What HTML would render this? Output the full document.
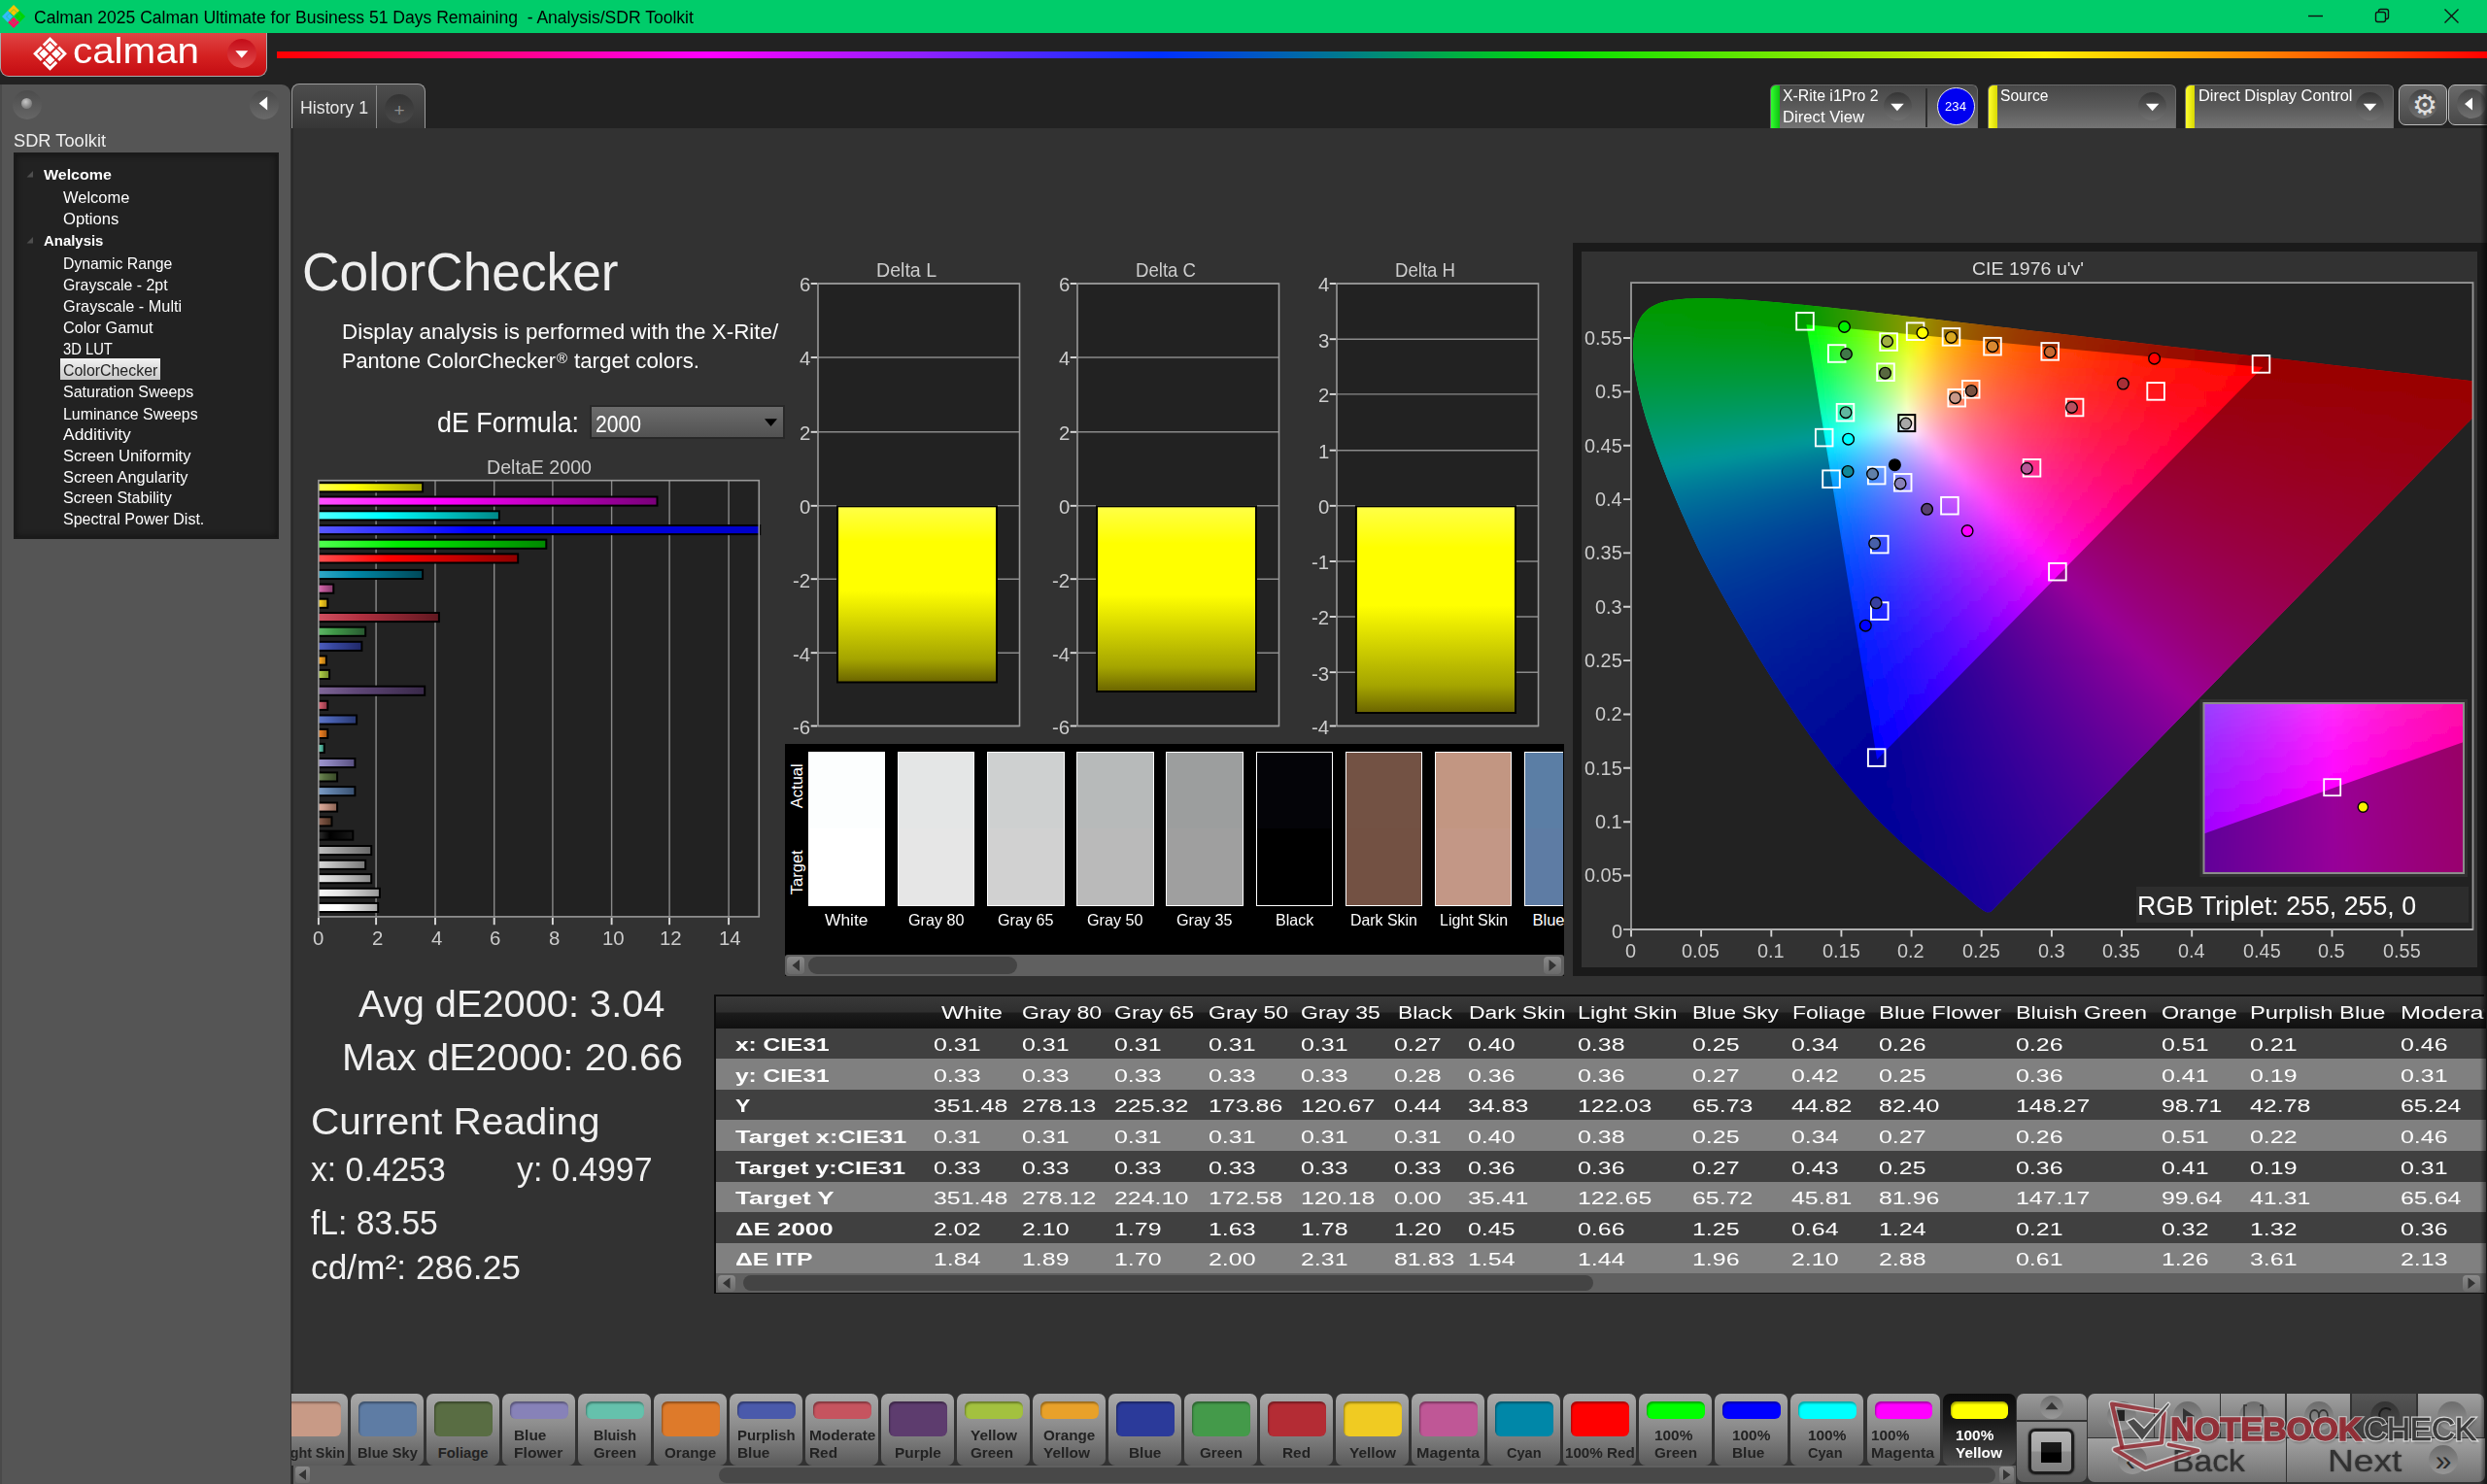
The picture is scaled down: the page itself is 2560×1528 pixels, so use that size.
<!DOCTYPE html>
<html><head><meta charset="utf-8"><title>Calman ColorChecker</title>
<style>
html,body{margin:0;padding:0;background:#323232;}
body{width:2560px;height:1528px;position:relative;overflow:hidden;font-family:"Liberation Sans",sans-serif;}
.a{position:absolute;box-sizing:border-box;}
.t{position:absolute;white-space:nowrap;line-height:1;transform-origin:0 50%;}
svg{position:absolute;left:0;top:0;}
</style></head>
<body>
<div class="a" style="left:0.0px;top:0.0px;width:2560.0px;height:34.0px;background:#00cc6a;"></div>
<span class="t" style="left:35.0px;top:9.1px;font-size:18.00px;color:#000;transform:scaleX(0.974);white-space:pre;">Calman 2025 Calman Ultimate for Business 51 Days Remaining  - Analysis/SDR Toolkit</span>
<div class="a" style="left:0.0px;top:34.0px;width:2560.0px;height:98.0px;background:#222;"></div>
<div class="a" style="left:0.0px;top:87.0px;width:299.0px;height:1441.0px;background:#555;border-top-right-radius:9px;border-left:2px solid #4a4a4a;"></div>
<div class="a" style="left:300.0px;top:132.0px;width:2260.0px;height:1396.0px;background:#323232;border-left:2px solid #2a2a2a;"></div>
<div class="a" style="left:0.0px;top:34.0px;width:275.0px;height:45.0px;background:linear-gradient(#e04444,#d42020 55%,#c40c12);border:1.5px solid #a9a9a9;border-top:none;border-radius:0 0 9px 9px;"></div>
<span class="t" style="left:74.6px;top:34.5px;font-size:36.50px;color:#fff;transform:scaleX(1.105);">calman</span>
<div class="a" style="left:234.0px;top:40.0px;width:30.0px;height:30.0px;border-radius:50%;background:linear-gradient(#c40c18,#e24a4a);"></div>
<div class="a" style="left:285.0px;top:52.5px;width:2275.0px;height:7.5px;background:linear-gradient(90deg,#ff0000 0%,#ff0080 10%,#ff00ff 19.5%,#9020ff 29%,#0030ff 40%,#007890 48%,#00e000 58%,#80e800 69%,#fff000 80%,#ff8000 90%,#ff0000 100%);"></div>
<div class="a" style="left:13.0px;top:92.5px;width:30.0px;height:30.0px;border-radius:50%;background:linear-gradient(#4c4c4c,#666);"></div>
<div class="a" style="left:22.2px;top:101.0px;width:11.0px;height:11.0px;border-radius:50%;background:radial-gradient(circle at 40% 35%,#c8c8c8,#858585 60%,#686868);"></div>
<div class="a" style="left:256.5px;top:92.5px;width:30.0px;height:30.0px;border-radius:50%;background:linear-gradient(#4a4a4a,#6a6a6a);"></div>
<span class="t" style="left:14.0px;top:134.6px;font-size:19.00px;color:#eee;transform:scaleX(0.961);">SDR Toolkit</span>
<div class="a" style="left:14.0px;top:157.0px;width:273.0px;height:398.0px;background:#222;border:2px solid #1a1a1a;box-shadow:inset 0 0 6px #111;"></div>
<span class="t" style="left:44.7px;top:171.8px;font-size:15.50px;color:#fff;font-weight:bold;transform:scaleX(1.031);">Welcome</span>
<svg width="300" height="600" viewBox="0 0 300 600"><path d="M34 176.1 v6.500 h-6.500Z" fill="#4e4e4e"/></svg>
<span class="t" style="left:64.5px;top:195.3px;font-size:16.20px;color:#fff;transform:scaleX(1.019);">Welcome</span>
<span class="t" style="left:64.5px;top:217.4px;font-size:16.20px;color:#fff;transform:scaleX(1.025);">Options</span>
<span class="t" style="left:44.7px;top:239.8px;font-size:15.50px;color:#fff;font-weight:bold;transform:scaleX(0.963);">Analysis</span>
<svg width="300" height="600" viewBox="0 0 300 600"><path d="M34 244.1 v6.500 h-6.500Z" fill="#4e4e4e"/></svg>
<span class="t" style="left:64.5px;top:263.2px;font-size:16.20px;color:#fff;transform:scaleX(0.975);">Dynamic Range</span>
<span class="t" style="left:64.5px;top:285.3px;font-size:16.20px;color:#fff;transform:scaleX(0.980);">Grayscale - 2pt</span>
<span class="t" style="left:64.5px;top:307.1px;font-size:16.20px;color:#fff;transform:scaleX(1.006);">Grayscale - Multi</span>
<span class="t" style="left:64.5px;top:329.2px;font-size:16.20px;color:#fff;transform:scaleX(1.008);">Color Gamut</span>
<span class="t" style="left:64.5px;top:351.0px;font-size:16.20px;color:#fff;transform:scaleX(0.912);">3D LUT</span>
<div class="a" style="left:61.5px;top:368.6px;width:103.5px;height:22.4px;background:linear-gradient(#f2f2f2,#c8c8c8);"></div>
<span class="t" style="left:64.5px;top:372.8px;font-size:16.20px;color:#222;transform:scaleX(0.983);">ColorChecker</span>
<span class="t" style="left:64.5px;top:395.4px;font-size:16.20px;color:#fff;transform:scaleX(0.988);">Saturation Sweeps</span>
<span class="t" style="left:64.5px;top:417.5px;font-size:16.20px;color:#fff;transform:scaleX(0.981);">Luminance Sweeps</span>
<span class="t" style="left:64.5px;top:439.3px;font-size:16.20px;color:#fff;transform:scaleX(1.078);">Additivity</span>
<span class="t" style="left:64.5px;top:461.3px;font-size:16.20px;color:#fff;transform:scaleX(1.022);">Screen Uniformity</span>
<span class="t" style="left:64.5px;top:482.6px;font-size:16.20px;color:#fff;transform:scaleX(1.012);">Screen Angularity</span>
<span class="t" style="left:64.5px;top:504.4px;font-size:16.20px;color:#fff;transform:scaleX(0.993);">Screen Stability</span>
<span class="t" style="left:64.5px;top:526.4px;font-size:16.20px;color:#fff;transform:scaleX(0.991);">Spectral Power Dist.</span>
<div class="a" style="left:299.8px;top:86.4px;width:137.8px;height:46.0px;background:linear-gradient(#4d4d4d,#373737);border:1.4px solid #9c9c9c;border-bottom:none;border-radius:8px 8px 0 0;"></div>
<div class="a" style="left:387.0px;top:88.0px;width:1.4px;height:44.0px;background:#8a8a8a;"></div>
<span class="t" style="left:309.0px;top:100.9px;font-size:19.00px;color:#e8e8e8;transform:scaleX(0.934);">History 1</span>
<div class="a" style="left:396.2px;top:97.0px;width:30.0px;height:30.0px;border-radius:50%;background:linear-gradient(#333,#4a4a4a);"></div>
<span class="t" style="left:405.5px;top:103.9px;font-size:19.00px;color:#8c8c8c;">+</span>
<div class="a" style="left:1821.5px;top:86.5px;width:214.0px;height:45.5px;background:linear-gradient(#474747,#5a5a5a 50%,#747474);border-radius:6px 6px 0 0;border:1px solid #6a6a6a;border-bottom:none;overflow:hidden;"><div class="a" style="left:0;top:0;width:9px;height:46px;background:linear-gradient(90deg,#30ff30,#10c010);"></div></div>
<span class="t" style="left:1835.0px;top:91.0px;font-size:16.00px;color:#fff;transform:scaleX(0.989);">X-Rite i1Pro 2</span>
<span class="t" style="left:1835.0px;top:113.0px;font-size:16.00px;color:#fff;transform:scaleX(1.042);">Direct View</span>
<div class="a" style="left:1938.5px;top:94.5px;width:29.0px;height:29.0px;border-radius:50%;background:linear-gradient(#353535,#727272);"></div>
<div class="a" style="left:1982.0px;top:91.0px;width:1.5px;height:40.0px;background:#2e2e2e;"></div>
<div class="a" style="left:1993.5px;top:89.5px;width:39.0px;height:39.0px;border-radius:50%;background:#0000f0;border:1.5px solid #e8e8e8;"></div>
<span class="t" style="left:2002.0px;top:103.0px;font-size:13.00px;color:#fff;transform:scaleX(1.014);">234</span>
<div class="a" style="left:2045.5px;top:86.5px;width:194.5px;height:45.5px;background:linear-gradient(#474747,#5a5a5a 50%,#747474);border-radius:6px 6px 0 0;border:1px solid #6a6a6a;border-bottom:none;overflow:hidden;"><div class="a" style="left:0;top:0;width:9px;height:46px;background:linear-gradient(90deg,#ffff30,#d8d800);"></div></div>
<span class="t" style="left:2058.5px;top:91.0px;font-size:16.00px;color:#fff;transform:scaleX(0.976);">Source</span>
<div class="a" style="left:2201.2px;top:94.5px;width:29.0px;height:29.0px;border-radius:50%;background:linear-gradient(#353535,#727272);"></div>
<div class="a" style="left:2249.0px;top:86.5px;width:215.0px;height:45.5px;background:linear-gradient(#474747,#5a5a5a 50%,#747474);border-radius:6px 6px 0 0;border:1px solid #6a6a6a;border-bottom:none;overflow:hidden;"><div class="a" style="left:0;top:0;width:9px;height:46px;background:linear-gradient(90deg,#ffff30,#d8d800);"></div></div>
<span class="t" style="left:2262.5px;top:91.0px;font-size:16.00px;color:#fff;transform:scaleX(1.024);">Direct Display Control</span>
<div class="a" style="left:2425.0px;top:94.5px;width:29.0px;height:29.0px;border-radius:50%;background:linear-gradient(#353535,#727272);"></div>
<div class="a" style="left:2469.0px;top:86.5px;width:50.0px;height:42.0px;background:linear-gradient(#6a6a6a,#484848);border:1.5px solid #bbb;border-radius:7px;"></div>
<div class="a" style="left:2519.5px;top:86.5px;width:50.0px;height:42.0px;background:linear-gradient(#6a6a6a,#484848);border:1.5px solid #bbb;border-radius:7px;"></div>
<div class="a" style="left:2478.5px;top:92.0px;width:30.0px;height:30.0px;border-radius:50%;background:linear-gradient(#444,#707070);"></div>
<div class="a" style="left:2529.0px;top:92.0px;width:30.0px;height:30.0px;border-radius:50%;background:linear-gradient(#444,#707070);"></div>
<span class="t" style="left:2483.1px;top:93.5px;font-size:29.00px;color:#e0e0e0;font-family:"DejaVu Sans",sans-serif;">⚙</span>
<svg width="2560" height="140" viewBox="0 0 2560 140"><path transform="translate(14.05 17.00) rotate(0)" d="M-4.9 -5 L0 -9.9 L4.9 -5" fill="none" stroke="#ffc400" stroke-width="3"/><path d="M14.05 9.75 L17.25 12.95 L14.05 16.15 L10.85 12.95Z" fill="#ffc400"/><path transform="translate(14.05 17.00) rotate(90)" d="M-4.9 -5 L0 -9.9 L4.9 -5" fill="none" stroke="#00d400" stroke-width="3"/><path d="M18.10 13.80 L21.30 17.00 L18.10 20.20 L14.90 17.00Z" fill="#00d400"/><path transform="translate(14.05 17.00) rotate(180)" d="M-4.9 -5 L0 -9.9 L4.9 -5" fill="none" stroke="#ff1060" stroke-width="3"/><path d="M14.05 17.85 L17.25 21.05 L14.05 24.25 L10.85 21.05Z" fill="#ff1060"/><path transform="translate(14.05 17.00) rotate(270)" d="M-4.9 -5 L0 -9.9 L4.9 -5" fill="none" stroke="#33bbff" stroke-width="3"/><path d="M10.00 13.80 L13.20 17.00 L10.00 20.20 L6.80 17.00Z" fill="#33bbff"/><g stroke="#111" stroke-width="1.4" fill="none"><path d="M2376 16.5 H2391"/><rect x="2445.5" y="12.5" width="10" height="10" rx="2"/><path d="M2448.5 12 V11.5 a2 2 0 0 1 2 -2 H2456.5 a2 2 0 0 1 2 2 V17.5 a2 2 0 0 1 -2 2 H2456"/><path d="M2516.5 9.5 L2530.5 23.5 M2530.5 9.5 L2516.5 23.5"/></g><path transform="translate(51.5 55.3) rotate(0)" d="M-6.7 -8.6 L0 -15.3 L6.7 -8.6" fill="none" stroke="#fff" stroke-width="3"/><path transform="translate(51.5 55.3) rotate(90)" d="M-6.7 -8.6 L0 -15.3 L6.7 -8.6" fill="none" stroke="#fff" stroke-width="3"/><path transform="translate(51.5 55.3) rotate(180)" d="M-6.7 -8.6 L0 -15.3 L6.7 -8.6" fill="none" stroke="#fff" stroke-width="3"/><path transform="translate(51.5 55.3) rotate(270)" d="M-6.7 -8.6 L0 -15.3 L6.7 -8.6" fill="none" stroke="#fff" stroke-width="3"/><path d="M51.5 44.0 L56.4 48.9 L51.5 53.8 L46.6 48.9Z" fill="#fff"/><path d="M45.1 50.4 L50.0 55.3 L45.1 60.2 L40.2 55.3Z" fill="#fff"/><path d="M57.9 50.4 L62.8 55.3 L57.9 60.2 L53.0 55.3Z" fill="#fff"/><path d="M51.5 56.8 L56.4 61.7 L51.5 66.6 L46.6 61.7Z" fill="#fff"/><path d="M242.3 52.2 h13.0 l-6.5 7.5Z" fill="#fff"/><path d="M275.2 99.5 v14.0 l-8.5 -7.0Z" fill="#fff"/><path d="M1946.2 106.8 h13.5 l-6.8 7.5Z" fill="#fff"/><path d="M2208.9 106.8 h13.5 l-6.8 7.5Z" fill="#fff"/><path d="M2432.8 106.8 h13.5 l-6.8 7.5Z" fill="#fff"/><path d="M2545.0 100.5 v13.0 l-8.0 -6.5Z" fill="#fff"/></svg>
<span class="t" style="left:311.0px;top:251.6px;font-size:56.00px;color:#eee;transform:scaleX(0.951);">ColorChecker</span>
<span class="t" style="left:351.5px;top:331.0px;font-size:22.50px;color:#fff;transform:scaleX(0.995);">Display analysis is performed with the X-Rite/</span>
<span class="t" style="left:351.5px;top:361.0px;font-size:22.50px;color:#fff;transform:scaleX(0.967);">Pantone ColorChecker</span>
<span class="t" style="left:573.0px;top:362.0px;font-size:14.50px;color:#fff;transform:scaleX(1.030);">®</span>
<span class="t" style="left:591.4px;top:361.0px;font-size:22.50px;color:#fff;transform:scaleX(0.992);">target colors.</span>
<span class="t" style="left:450.0px;top:419.5px;font-size:29.50px;color:#fff;transform:scaleX(0.909);">dE Formula:</span>
<div class="a" style="left:606.5px;top:416.5px;width:201.0px;height:35.5px;background:linear-gradient(#6c6c6c,#525252);border:2px solid #282828;"></div>
<span class="t" style="left:613.0px;top:426.0px;font-size:23.00px;color:#fff;transform:scaleX(0.919);">2000</span>
<span class="t" style="left:501.0px;top:470.6px;font-size:20.50px;color:#ccc;transform:scaleX(0.957);">DeltaE 2000</span>
<svg width="2560" height="1528" viewBox="0 0 2560 1528"><defs><linearGradient id="b0"><stop offset="0" stop-color="#ffff50"/><stop offset=".35" stop-color="#ffff00"/><stop offset="1" stop-color="#a8a800"/></linearGradient><linearGradient id="b1"><stop offset="0" stop-color="#ff50ff"/><stop offset=".35" stop-color="#ff00ff"/><stop offset="1" stop-color="#7a007a"/></linearGradient><linearGradient id="b2"><stop offset="0" stop-color="#50ffff"/><stop offset=".35" stop-color="#00ffff"/><stop offset="1" stop-color="#008888"/></linearGradient><linearGradient id="b3"><stop offset="0" stop-color="#5858ff"/><stop offset=".35" stop-color="#0000ff"/><stop offset="1" stop-color="#0000c8"/></linearGradient><linearGradient id="b4"><stop offset="0" stop-color="#50ff50"/><stop offset=".35" stop-color="#00ee00"/><stop offset="1" stop-color="#008800"/></linearGradient><linearGradient id="b5"><stop offset="0" stop-color="#ff5050"/><stop offset=".35" stop-color="#ff0000"/><stop offset="1" stop-color="#900000"/></linearGradient><linearGradient id="b6"><stop offset="0" stop-color="#30a8c8"/><stop offset=".35" stop-color="#0088a8"/><stop offset="1" stop-color="#004858"/></linearGradient><linearGradient id="b7"><stop offset="0" stop-color="#d878b8"/><stop offset=".35" stop-color="#c05898"/><stop offset="1" stop-color="#803868"/></linearGradient><linearGradient id="b8"><stop offset="0" stop-color="#ffe040"/><stop offset=".35" stop-color="#f0c820"/><stop offset="1" stop-color="#b09010"/></linearGradient><linearGradient id="b9"><stop offset="0" stop-color="#d05060"/><stop offset=".35" stop-color="#b03040"/><stop offset="1" stop-color="#601820"/></linearGradient><linearGradient id="b10"><stop offset="0" stop-color="#60b868"/><stop offset=".35" stop-color="#409848"/><stop offset="1" stop-color="#285830"/></linearGradient><linearGradient id="b11"><stop offset="0" stop-color="#5060c0"/><stop offset=".35" stop-color="#3848a0"/><stop offset="1" stop-color="#202868"/></linearGradient><linearGradient id="b12"><stop offset="0" stop-color="#ffb840"/><stop offset=".35" stop-color="#f0a020"/><stop offset="1" stop-color="#a87010"/></linearGradient><linearGradient id="b13"><stop offset="0" stop-color="#c0d860"/><stop offset=".35" stop-color="#a0c040"/><stop offset="1" stop-color="#708828"/></linearGradient><linearGradient id="b14"><stop offset="0" stop-color="#806898"/><stop offset=".35" stop-color="#604878"/><stop offset="1" stop-color="#382848"/></linearGradient><linearGradient id="b15"><stop offset="0" stop-color="#e07080"/><stop offset=".35" stop-color="#c85868"/><stop offset="1" stop-color="#883040"/></linearGradient><linearGradient id="b16"><stop offset="0" stop-color="#6078c8"/><stop offset=".35" stop-color="#4860b0"/><stop offset="1" stop-color="#283870"/></linearGradient><linearGradient id="b17"><stop offset="0" stop-color="#f09040"/><stop offset=".35" stop-color="#e07820"/><stop offset="1" stop-color="#985010"/></linearGradient><linearGradient id="b18"><stop offset="0" stop-color="#80d8c0"/><stop offset=".35" stop-color="#60c0a8"/><stop offset="1" stop-color="#308070"/></linearGradient><linearGradient id="b19"><stop offset="0" stop-color="#a098d0"/><stop offset=".35" stop-color="#8880b8"/><stop offset="1" stop-color="#585080"/></linearGradient><linearGradient id="b20"><stop offset="0" stop-color="#789060"/><stop offset=".35" stop-color="#587040"/><stop offset="1" stop-color="#384828"/></linearGradient><linearGradient id="b21"><stop offset="0" stop-color="#80a0c8"/><stop offset=".35" stop-color="#6080a8"/><stop offset="1" stop-color="#385070"/></linearGradient><linearGradient id="b22"><stop offset="0" stop-color="#e0b0a0"/><stop offset=".35" stop-color="#c89888"/><stop offset="1" stop-color="#886050"/></linearGradient><linearGradient id="b23"><stop offset="0" stop-color="#906858"/><stop offset=".35" stop-color="#785040"/><stop offset="1" stop-color="#483020"/></linearGradient><linearGradient id="b24"><stop offset="0" stop-color="#303030"/><stop offset=".35" stop-color="#000000"/><stop offset="1" stop-color="#181818"/></linearGradient><linearGradient id="b25"><stop offset="0" stop-color="#c0c0c0"/><stop offset=".35" stop-color="#a0a0a0"/><stop offset="1" stop-color="#686868"/></linearGradient><linearGradient id="b26"><stop offset="0" stop-color="#d8d8d8"/><stop offset=".35" stop-color="#b8b8b8"/><stop offset="1" stop-color="#787878"/></linearGradient><linearGradient id="b27"><stop offset="0" stop-color="#e8e8e8"/><stop offset=".35" stop-color="#d0d0d0"/><stop offset="1" stop-color="#888888"/></linearGradient><linearGradient id="b28"><stop offset="0" stop-color="#f8f8f8"/><stop offset=".35" stop-color="#e6e6e6"/><stop offset="1" stop-color="#989898"/></linearGradient><linearGradient id="b29"><stop offset="0" stop-color="#ffffff"/><stop offset=".35" stop-color="#ffffff"/><stop offset="1" stop-color="#a8a8a8"/></linearGradient><linearGradient id="yb" x1="0" y1="0" x2="0" y2="1"><stop offset="0" stop-color="#ffff48"/><stop offset=".2" stop-color="#ffff00"/><stop offset=".48" stop-color="#ffff00"/><stop offset=".87" stop-color="#a4a400"/><stop offset="1" stop-color="#6a6400"/></linearGradient></defs><rect x="327.9" y="494.7" width="453.4" height="449.2" fill="#222"/><path d="M387.1 494.7 V943.9" stroke="#8a8a8a" stroke-width="1.4"/><path d="M387.1 944.7 v7.5" stroke="#dcdcdc" stroke-width="1.9"/><path d="M448.0 494.7 V943.9" stroke="#8a8a8a" stroke-width="1.4"/><path d="M448.0 944.7 v7.5" stroke="#dcdcdc" stroke-width="1.9"/><path d="M508.7 494.7 V943.9" stroke="#8a8a8a" stroke-width="1.4"/><path d="M508.7 944.7 v7.5" stroke="#dcdcdc" stroke-width="1.9"/><path d="M568.9 494.7 V943.9" stroke="#8a8a8a" stroke-width="1.4"/><path d="M568.9 944.7 v7.5" stroke="#dcdcdc" stroke-width="1.9"/><path d="M629.6 494.7 V943.9" stroke="#8a8a8a" stroke-width="1.4"/><path d="M629.6 944.7 v7.5" stroke="#dcdcdc" stroke-width="1.9"/><path d="M689.1 494.7 V943.9" stroke="#8a8a8a" stroke-width="1.4"/><path d="M689.1 944.7 v7.5" stroke="#dcdcdc" stroke-width="1.9"/><path d="M750.1 494.7 V943.9" stroke="#8a8a8a" stroke-width="1.4"/><path d="M750.1 944.7 v7.5" stroke="#dcdcdc" stroke-width="1.9"/><path d="M327.9 944.7 v7.5" stroke="#dcdcdc" stroke-width="1.9"/><clipPath id="bc"><rect x="327.9" y="494.7" width="455.4" height="449.2"/></clipPath><g clip-path="url(#bc)"><rect x="326.9" y="497.2" width="108.2" height="9.1" fill="url(#b0)" stroke="#000" stroke-width="2"/><rect x="326.9" y="511.5" width="349.6" height="9.1" fill="url(#b1)" stroke="#000" stroke-width="2"/><rect x="326.9" y="526.3" width="187.0" height="9.1" fill="url(#b2)" stroke="#000" stroke-width="2"/><rect x="326.9" y="541.0" width="455.9" height="9.1" fill="url(#b3)" stroke="#000" stroke-width="2"/><rect x="326.9" y="555.7" width="235.4" height="9.1" fill="url(#b4)" stroke="#000" stroke-width="2"/><rect x="326.9" y="570.4" width="206.3" height="9.1" fill="url(#b5)" stroke="#000" stroke-width="2"/><rect x="326.9" y="586.9" width="108.2" height="9.1" fill="url(#b6)" stroke="#000" stroke-width="2"/><rect x="326.9" y="601.6" width="16.4" height="9.1" fill="url(#b7)" stroke="#000" stroke-width="2"/><rect x="326.9" y="616.7" width="10.4" height="9.1" fill="url(#b8)" stroke="#000" stroke-width="2"/><rect x="326.9" y="631.0" width="125.0" height="9.1" fill="url(#b9)" stroke="#000" stroke-width="2"/><rect x="326.9" y="645.7" width="49.3" height="9.1" fill="url(#b10)" stroke="#000" stroke-width="2"/><rect x="326.9" y="660.8" width="45.5" height="9.1" fill="url(#b11)" stroke="#000" stroke-width="2"/><rect x="326.9" y="675.5" width="9.0" height="9.1" fill="url(#b12)" stroke="#000" stroke-width="2"/><rect x="326.9" y="689.9" width="12.2" height="9.1" fill="url(#b13)" stroke="#000" stroke-width="2"/><rect x="326.9" y="706.7" width="110.3" height="9.1" fill="url(#b14)" stroke="#000" stroke-width="2"/><rect x="326.9" y="721.8" width="10.4" height="9.1" fill="url(#b15)" stroke="#000" stroke-width="2"/><rect x="326.9" y="736.5" width="40.2" height="9.1" fill="url(#b16)" stroke="#000" stroke-width="2"/><rect x="326.9" y="750.9" width="10.4" height="9.1" fill="url(#b17)" stroke="#000" stroke-width="2"/><rect x="326.9" y="765.9" width="6.9" height="9.1" fill="url(#b18)" stroke="#000" stroke-width="2"/><rect x="326.9" y="781.0" width="38.5" height="9.1" fill="url(#b19)" stroke="#000" stroke-width="2"/><rect x="326.9" y="795.4" width="20.2" height="9.1" fill="url(#b20)" stroke="#000" stroke-width="2"/><rect x="326.9" y="810.1" width="38.5" height="9.1" fill="url(#b21)" stroke="#000" stroke-width="2"/><rect x="326.9" y="826.5" width="20.2" height="9.1" fill="url(#b22)" stroke="#000" stroke-width="2"/><rect x="326.9" y="841.3" width="14.6" height="9.1" fill="url(#b23)" stroke="#000" stroke-width="2"/><rect x="326.9" y="855.6" width="36.4" height="9.1" fill="url(#b24)" stroke="#000" stroke-width="2"/><rect x="326.9" y="871.0" width="55.3" height="9.1" fill="url(#b25)" stroke="#000" stroke-width="2"/><rect x="326.9" y="885.8" width="49.3" height="9.1" fill="url(#b26)" stroke="#000" stroke-width="2"/><rect x="326.9" y="900.1" width="55.3" height="9.1" fill="url(#b27)" stroke="#000" stroke-width="2"/><rect x="326.9" y="914.8" width="64.0" height="9.1" fill="url(#b28)" stroke="#000" stroke-width="2"/><rect x="326.9" y="929.9" width="62.3" height="9.1" fill="url(#b29)" stroke="#000" stroke-width="2"/></g><rect x="327.9" y="494.7" width="453.4" height="449.2" fill="none" stroke="#999" stroke-width="1.6"/><rect x="842.0" y="292.0" width="207.5" height="455.5" fill="#222"/><path d="M842.0 292.0 H1049.5" stroke="#8a8a8a" stroke-width="1.4"/><path d="M841.2 292.0 h-6.5" stroke="#dcdcdc" stroke-width="1.9"/><path d="M842.0 368.0 H1049.5" stroke="#8a8a8a" stroke-width="1.4"/><path d="M841.2 368.0 h-6.5" stroke="#dcdcdc" stroke-width="1.9"/><path d="M842.0 444.8 H1049.5" stroke="#8a8a8a" stroke-width="1.4"/><path d="M841.2 444.8 h-6.5" stroke="#dcdcdc" stroke-width="1.9"/><path d="M842.0 520.8 H1049.5" stroke="#8a8a8a" stroke-width="1.4"/><path d="M841.2 520.8 h-6.5" stroke="#dcdcdc" stroke-width="1.9"/><path d="M842.0 596.2 H1049.5" stroke="#8a8a8a" stroke-width="1.4"/><path d="M841.2 596.2 h-6.5" stroke="#dcdcdc" stroke-width="1.9"/><path d="M842.0 672.2 H1049.5" stroke="#8a8a8a" stroke-width="1.4"/><path d="M841.2 672.2 h-6.5" stroke="#dcdcdc" stroke-width="1.9"/><path d="M842.0 747.5 H1049.5" stroke="#8a8a8a" stroke-width="1.4"/><path d="M841.2 747.5 h-6.5" stroke="#dcdcdc" stroke-width="1.9"/><rect x="842.0" y="292.0" width="207.5" height="455.5" fill="none" stroke="#999" stroke-width="1.6"/><rect x="862.0" y="521.3" width="164.0" height="181.2" fill="url(#yb)" stroke="#000" stroke-width="2"/><rect x="1109.0" y="292.0" width="207.5" height="455.5" fill="#222"/><path d="M1109.0 292.0 H1316.5" stroke="#8a8a8a" stroke-width="1.4"/><path d="M1108.2 292.0 h-6.5" stroke="#dcdcdc" stroke-width="1.9"/><path d="M1109.0 368.0 H1316.5" stroke="#8a8a8a" stroke-width="1.4"/><path d="M1108.2 368.0 h-6.5" stroke="#dcdcdc" stroke-width="1.9"/><path d="M1109.0 444.8 H1316.5" stroke="#8a8a8a" stroke-width="1.4"/><path d="M1108.2 444.8 h-6.5" stroke="#dcdcdc" stroke-width="1.9"/><path d="M1109.0 520.8 H1316.5" stroke="#8a8a8a" stroke-width="1.4"/><path d="M1108.2 520.8 h-6.5" stroke="#dcdcdc" stroke-width="1.9"/><path d="M1109.0 596.2 H1316.5" stroke="#8a8a8a" stroke-width="1.4"/><path d="M1108.2 596.2 h-6.5" stroke="#dcdcdc" stroke-width="1.9"/><path d="M1109.0 672.2 H1316.5" stroke="#8a8a8a" stroke-width="1.4"/><path d="M1108.2 672.2 h-6.5" stroke="#dcdcdc" stroke-width="1.9"/><path d="M1109.0 747.5 H1316.5" stroke="#8a8a8a" stroke-width="1.4"/><path d="M1108.2 747.5 h-6.5" stroke="#dcdcdc" stroke-width="1.9"/><rect x="1109.0" y="292.0" width="207.5" height="455.5" fill="none" stroke="#999" stroke-width="1.6"/><rect x="1129.0" y="521.3" width="164.0" height="190.7" fill="url(#yb)" stroke="#000" stroke-width="2"/><rect x="1376.0" y="292.0" width="207.5" height="455.5" fill="#222"/><path d="M1376.0 292.0 H1583.5" stroke="#8a8a8a" stroke-width="1.4"/><path d="M1375.2 292.0 h-6.5" stroke="#dcdcdc" stroke-width="1.9"/><path d="M1376.0 349.2 H1583.5" stroke="#8a8a8a" stroke-width="1.4"/><path d="M1375.2 349.2 h-6.5" stroke="#dcdcdc" stroke-width="1.9"/><path d="M1376.0 405.9 H1583.5" stroke="#8a8a8a" stroke-width="1.4"/><path d="M1375.2 405.9 h-6.5" stroke="#dcdcdc" stroke-width="1.9"/><path d="M1376.0 463.7 H1583.5" stroke="#8a8a8a" stroke-width="1.4"/><path d="M1375.2 463.7 h-6.5" stroke="#dcdcdc" stroke-width="1.9"/><path d="M1376.0 520.8 H1583.5" stroke="#8a8a8a" stroke-width="1.4"/><path d="M1375.2 520.8 h-6.5" stroke="#dcdcdc" stroke-width="1.9"/><path d="M1376.0 578.0 H1583.5" stroke="#8a8a8a" stroke-width="1.4"/><path d="M1375.2 578.0 h-6.5" stroke="#dcdcdc" stroke-width="1.9"/><path d="M1376.0 635.0 H1583.5" stroke="#8a8a8a" stroke-width="1.4"/><path d="M1375.2 635.0 h-6.5" stroke="#dcdcdc" stroke-width="1.9"/><path d="M1376.0 692.2 H1583.5" stroke="#8a8a8a" stroke-width="1.4"/><path d="M1375.2 692.2 h-6.5" stroke="#dcdcdc" stroke-width="1.9"/><path d="M1376.0 747.5 H1583.5" stroke="#8a8a8a" stroke-width="1.4"/><path d="M1375.2 747.5 h-6.5" stroke="#dcdcdc" stroke-width="1.9"/><rect x="1376.0" y="292.0" width="207.5" height="455.5" fill="none" stroke="#999" stroke-width="1.6"/><rect x="1395.9" y="521.3" width="164.1" height="212.7" fill="url(#yb)" stroke="#000" stroke-width="2"/><path d="M787 431.3 h13 l-6.5 7.7Z" fill="#000"/></svg>
<span class="t" style="left:322.2px;top:955.9px;font-size:20.00px;color:#ccc;transform:scaleX(1.020);">0</span>
<span class="t" style="left:382.8px;top:955.9px;font-size:20.00px;color:#ccc;transform:scaleX(1.020);">2</span>
<span class="t" style="left:443.7px;top:955.9px;font-size:20.00px;color:#ccc;transform:scaleX(1.020);">4</span>
<span class="t" style="left:504.4px;top:955.9px;font-size:20.00px;color:#ccc;transform:scaleX(1.020);">6</span>
<span class="t" style="left:564.6px;top:955.9px;font-size:20.00px;color:#ccc;transform:scaleX(1.020);">8</span>
<span class="t" style="left:619.7px;top:955.9px;font-size:20.00px;color:#ccc;transform:scaleX(1.020);">10</span>
<span class="t" style="left:679.2px;top:955.9px;font-size:20.00px;color:#ccc;transform:scaleX(1.020);">12</span>
<span class="t" style="left:740.2px;top:955.9px;font-size:20.00px;color:#ccc;transform:scaleX(1.020);">14</span>
<span class="t" style="left:822.7px;top:283.4px;font-size:20.00px;color:#ccc;transform:scaleX(1.020);">6</span>
<span class="t" style="left:822.7px;top:359.4px;font-size:20.00px;color:#ccc;transform:scaleX(1.020);">4</span>
<span class="t" style="left:822.7px;top:436.2px;font-size:20.00px;color:#ccc;transform:scaleX(1.020);">2</span>
<span class="t" style="left:822.7px;top:512.2px;font-size:20.00px;color:#ccc;transform:scaleX(1.020);">0</span>
<span class="t" style="left:815.9px;top:587.6px;font-size:20.00px;color:#ccc;transform:scaleX(1.020);">-2</span>
<span class="t" style="left:815.9px;top:663.6px;font-size:20.00px;color:#ccc;transform:scaleX(1.020);">-4</span>
<span class="t" style="left:815.9px;top:738.9px;font-size:20.00px;color:#ccc;transform:scaleX(1.020);">-6</span>
<span class="t" style="left:902.0px;top:267.6px;font-size:20.50px;color:#ccc;transform:scaleX(0.955);">Delta L</span>
<span class="t" style="left:1089.7px;top:283.4px;font-size:20.00px;color:#ccc;transform:scaleX(1.020);">6</span>
<span class="t" style="left:1089.7px;top:359.4px;font-size:20.00px;color:#ccc;transform:scaleX(1.020);">4</span>
<span class="t" style="left:1089.7px;top:436.2px;font-size:20.00px;color:#ccc;transform:scaleX(1.020);">2</span>
<span class="t" style="left:1089.7px;top:512.2px;font-size:20.00px;color:#ccc;transform:scaleX(1.020);">0</span>
<span class="t" style="left:1082.9px;top:587.6px;font-size:20.00px;color:#ccc;transform:scaleX(1.020);">-2</span>
<span class="t" style="left:1082.9px;top:663.6px;font-size:20.00px;color:#ccc;transform:scaleX(1.020);">-4</span>
<span class="t" style="left:1082.9px;top:738.9px;font-size:20.00px;color:#ccc;transform:scaleX(1.020);">-6</span>
<span class="t" style="left:1168.5px;top:267.6px;font-size:20.50px;color:#ccc;transform:scaleX(0.907);">Delta C</span>
<span class="t" style="left:1356.7px;top:283.4px;font-size:20.00px;color:#ccc;transform:scaleX(1.020);">4</span>
<span class="t" style="left:1356.7px;top:340.6px;font-size:20.00px;color:#ccc;transform:scaleX(1.020);">3</span>
<span class="t" style="left:1356.7px;top:397.3px;font-size:20.00px;color:#ccc;transform:scaleX(1.020);">2</span>
<span class="t" style="left:1356.7px;top:455.1px;font-size:20.00px;color:#ccc;transform:scaleX(1.020);">1</span>
<span class="t" style="left:1356.7px;top:512.2px;font-size:20.00px;color:#ccc;transform:scaleX(1.020);">0</span>
<span class="t" style="left:1349.9px;top:569.4px;font-size:20.00px;color:#ccc;transform:scaleX(1.020);">-1</span>
<span class="t" style="left:1349.9px;top:626.4px;font-size:20.00px;color:#ccc;transform:scaleX(1.020);">-2</span>
<span class="t" style="left:1349.9px;top:683.6px;font-size:20.00px;color:#ccc;transform:scaleX(1.020);">-3</span>
<span class="t" style="left:1349.9px;top:738.9px;font-size:20.00px;color:#ccc;transform:scaleX(1.020);">-4</span>
<span class="t" style="left:1435.5px;top:267.6px;font-size:20.50px;color:#ccc;transform:scaleX(0.907);">Delta H</span>
<div class="a" style="left:808.0px;top:766.0px;width:801.5px;height:239.0px;background:#000;"></div>
<div class="a" style="left:831.7px;top:773.7px;width:79.5px;height:159.6px;background:linear-gradient(#fcfefe 50%,#ffffff 50%);border:1.6px solid #fff;"></div>
<span class="t" style="left:849.2px;top:938.8px;font-size:16.50px;color:#fff;transform:scaleX(1.055);">White</span>
<div class="a" style="left:923.9px;top:773.7px;width:79.5px;height:159.6px;background:linear-gradient(#e4e6e6 50%,#e6e6e6 50%);border:1.6px solid #fff;"></div>
<span class="t" style="left:934.9px;top:938.8px;font-size:16.50px;color:#fff;transform:scaleX(0.978);">Gray 80</span>
<div class="a" style="left:1016.0px;top:773.7px;width:79.5px;height:159.6px;background:linear-gradient(#ced0d0 50%,#d1d1d1 50%);border:1.6px solid #fff;"></div>
<span class="t" style="left:1027.0px;top:938.8px;font-size:16.50px;color:#fff;transform:scaleX(0.978);">Gray 65</span>
<div class="a" style="left:1108.2px;top:773.7px;width:79.5px;height:159.6px;background:linear-gradient(#b7baba 50%,#bababa 50%);border:1.6px solid #fff;"></div>
<span class="t" style="left:1119.2px;top:938.8px;font-size:16.50px;color:#fff;transform:scaleX(0.978);">Gray 50</span>
<div class="a" style="left:1200.4px;top:773.7px;width:79.5px;height:159.6px;background:linear-gradient(#9c9e9e 50%,#9f9f9f 50%);border:1.6px solid #fff;"></div>
<span class="t" style="left:1211.4px;top:938.8px;font-size:16.50px;color:#fff;transform:scaleX(0.978);">Gray 35</span>
<div class="a" style="left:1292.6px;top:773.7px;width:79.5px;height:159.6px;background:linear-gradient(#040408 50%,#000000 50%);border:1.6px solid #fff;"></div>
<span class="t" style="left:1312.7px;top:938.8px;font-size:16.50px;color:#fff;transform:scaleX(0.972);">Black</span>
<div class="a" style="left:1384.7px;top:773.7px;width:79.5px;height:159.6px;background:linear-gradient(#735244 50%,#735143 50%);border:1.6px solid #fff;"></div>
<span class="t" style="left:1390.0px;top:938.8px;font-size:16.50px;color:#fff;transform:scaleX(0.963);">Dark Skin</span>
<div class="a" style="left:1476.9px;top:773.7px;width:79.5px;height:159.6px;background:linear-gradient(#c29682 50%,#c39786 50%);border:1.6px solid #fff;"></div>
<span class="t" style="left:1481.5px;top:938.8px;font-size:16.50px;color:#fff;transform:scaleX(0.969);">Light Skin</span>
<div class="a" style="left:1569.1px;top:773.7px;width:40.4px;height:159.6px;background:linear-gradient(#5b7ea5 50%,#5e7ca4 50%);border:1.6px solid #fff;border-right:none;"></div>
<div class="a" style="left:1570.0px;top:935.0px;width:39.5px;height:30.0px;overflow:hidden;"><span class="t" style="left:7.5px;top:3.8px;font-size:16.50px;color:#fff;">Blue Sky</span></div>
<span class="t" style="left:0.0px;top:-14.0px;font-size:16.50px;color:#fff;left:797px;top:801.3px;transform:rotate(-90deg);transform-origin:50% 50%;width:46px;text-align:center;">Actual</span>
<span class="t" style="left:0.0px;top:-14.0px;font-size:16.50px;color:#fff;left:797px;top:890.3px;transform:rotate(-90deg);transform-origin:50% 50%;width:46px;text-align:center;">Target</span>
<div class="a" style="left:808.0px;top:983.0px;width:801.5px;height:22.0px;background:#606060;border-radius:3px;"></div>
<div class="a" style="left:810.0px;top:985.0px;width:18.0px;height:18.0px;background:linear-gradient(#8a8a8a,#6a6a6a);border-radius:4px;"></div>
<div class="a" style="left:1589.0px;top:985.0px;width:18.0px;height:18.0px;background:linear-gradient(#8a8a8a,#6a6a6a);border-radius:4px;"></div>
<div class="a" style="left:832.0px;top:985.0px;width:215.0px;height:18.0px;background:#444;border-radius:9px;"></div>
<svg width="2560" height="1528" viewBox="0 0 2560 1528"><path d="M823 988 v12 l-7.5 -6Z M1594.5 988 v12 l7.5 -6Z" fill="#333"/></svg>
<div class="a" style="left:1619.0px;top:249.9px;width:950.0px;height:755.0px;background:#1a1a1a;"></div>
<div class="a" style="left:1628.0px;top:258.8px;width:922.0px;height:737.1px;background:#323232;"></div>
<span class="t" style="left:2030.0px;top:267.8px;font-size:18.50px;color:#ddd;transform:scaleX(1.056);">CIE 1976 u&#x27;v&#x27;</span>
<svg width="2560" height="1528" viewBox="0 0 2560 1528"><defs><linearGradient id="g0" gradientUnits="userSpaceOnUse" x1="1697" x2="1858"><stop offset="0" stop-color="#00ff00"/><stop offset=".909" stop-color="#00ff00"/><stop offset="1" stop-color="#05ff00"/></linearGradient><linearGradient id="g1" gradientUnits="userSpaceOnUse" x1="1684" x2="1933"><stop offset="0" stop-color="#00ff00"/><stop offset=".688" stop-color="#00ff00"/><stop offset=".875" stop-color="#52ff00"/><stop offset="1" stop-color="#93ff00"/></linearGradient><linearGradient id="g2" gradientUnits="userSpaceOnUse" x1="1679" x2="2004"><stop offset="0" stop-color="#00ff02"/><stop offset=".524" stop-color="#00ff00"/><stop offset=".571" stop-color="#0dff00"/><stop offset=".714" stop-color="#64ff00"/><stop offset=".857" stop-color="#ceff00"/><stop offset=".905" stop-color="#f6ff00"/><stop offset=".952" stop-color="#ffe000"/><stop offset="1" stop-color="#ffc100"/></linearGradient><linearGradient id="g3" gradientUnits="userSpaceOnUse" x1="1679" x2="2073"><stop offset="0" stop-color="#00ff0b"/><stop offset=".36" stop-color="#00ff00"/><stop offset=".44" stop-color="#00ff00"/><stop offset=".48" stop-color="#11ff00"/><stop offset=".6" stop-color="#6dff00"/><stop offset=".72" stop-color="#deff00"/><stop offset=".76" stop-color="#fff500"/><stop offset=".8" stop-color="#ffd000"/><stop offset=".88" stop-color="#ff9b00"/><stop offset=".96" stop-color="#ff7700"/><stop offset="1" stop-color="#ff6900"/></linearGradient><linearGradient id="g4" gradientUnits="userSpaceOnUse" x1="1679" x2="2143"><stop offset="0" stop-color="#00ff15"/><stop offset=".367" stop-color="#00ff03"/><stop offset=".4" stop-color="#09ff01"/><stop offset=".5" stop-color="#63ff00"/><stop offset=".6" stop-color="#d1ff00"/><stop offset=".633" stop-color="#fbff00"/><stop offset=".7" stop-color="#ffbb00"/><stop offset=".767" stop-color="#ff8d00"/><stop offset=".867" stop-color="#ff6000"/><stop offset="1" stop-color="#ff3b00"/></linearGradient><linearGradient id="g5" gradientUnits="userSpaceOnUse" x1="1679" x2="2213"><stop offset="0" stop-color="#00ff1f"/><stop offset=".324" stop-color="#00ff10"/><stop offset=".353" stop-color="#0cff0e"/><stop offset=".441" stop-color="#69ff07"/><stop offset=".529" stop-color="#ddff00"/><stop offset=".559" stop-color="#fff400"/><stop offset=".588" stop-color="#ffcf00"/><stop offset=".647" stop-color="#ff9900"/><stop offset=".735" stop-color="#ff6600"/><stop offset=".824" stop-color="#ff4600"/><stop offset=".971" stop-color="#ff2500"/><stop offset="1" stop-color="#ff2000"/></linearGradient><linearGradient id="g6" gradientUnits="userSpaceOnUse" x1="1679" x2="2282"><stop offset="0" stop-color="#00ff29"/><stop offset=".289" stop-color="#00ff1d"/><stop offset=".316" stop-color="#0eff1b"/><stop offset=".395" stop-color="#6fff16"/><stop offset=".447" stop-color="#bdff11"/><stop offset=".474" stop-color="#e8ff0f"/><stop offset=".5" stop-color="#ffe90b"/><stop offset=".526" stop-color="#ffc507"/><stop offset=".579" stop-color="#ff9102"/><stop offset=".658" stop-color="#ff6000"/><stop offset=".763" stop-color="#ff3900"/><stop offset=".921" stop-color="#ff1800"/><stop offset="1" stop-color="#ff0d00"/></linearGradient><linearGradient id="g7" gradientUnits="userSpaceOnUse" x1="1679" x2="2353"><stop offset="0" stop-color="#00ff33"/><stop offset=".256" stop-color="#00ff2b"/><stop offset=".279" stop-color="#06ff2a"/><stop offset=".349" stop-color="#67ff26"/><stop offset=".419" stop-color="#dfff21"/><stop offset=".442" stop-color="#fff11d"/><stop offset=".465" stop-color="#ffcb17"/><stop offset=".488" stop-color="#ffad12"/><stop offset=".535" stop-color="#ff810b"/><stop offset=".605" stop-color="#ff5604"/><stop offset=".721" stop-color="#ff2d00"/><stop offset=".884" stop-color="#ff0d00"/><stop offset="1" stop-color="#ff0000"/></linearGradient><linearGradient id="g8" gradientUnits="userSpaceOnUse" x1="1679" x2="2422"><stop offset="0" stop-color="#00ff3e"/><stop offset=".234" stop-color="#00ff39"/><stop offset=".255" stop-color="#08ff38"/><stop offset=".298" stop-color="#48ff37"/><stop offset=".34" stop-color="#92ff35"/><stop offset=".383" stop-color="#e8ff33"/><stop offset=".404" stop-color="#ffe72d"/><stop offset=".426" stop-color="#ffc225"/><stop offset=".447" stop-color="#ffa51f"/><stop offset=".489" stop-color="#ff7b15"/><stop offset=".553" stop-color="#ff520c"/><stop offset=".66" stop-color="#ff2903"/><stop offset=".83" stop-color="#ff0800"/><stop offset=".915" stop-color="#ff0000"/><stop offset="1" stop-color="#ff0000"/></linearGradient><linearGradient id="g9" gradientUnits="userSpaceOnUse" x1="1679" x2="2492"><stop offset="0" stop-color="#00ff49"/><stop offset=".216" stop-color="#00ff47"/><stop offset=".235" stop-color="#08ff47"/><stop offset=".294" stop-color="#6fff47"/><stop offset=".333" stop-color="#c2ff46"/><stop offset=".353" stop-color="#f1ff46"/><stop offset=".373" stop-color="#ffdf3d"/><stop offset=".392" stop-color="#ffbb33"/><stop offset=".431" stop-color="#ff8824"/><stop offset=".471" stop-color="#ff661b"/><stop offset=".529" stop-color="#ff4311"/><stop offset=".627" stop-color="#ff2107"/><stop offset=".784" stop-color="#ff0300"/><stop offset="1" stop-color="#ff0000"/></linearGradient><linearGradient id="g10" gradientUnits="userSpaceOnUse" x1="1679" x2="2546"><stop offset="0" stop-color="#00ff54"/><stop offset=".218" stop-color="#01ff57"/><stop offset=".273" stop-color="#68ff58"/><stop offset=".309" stop-color="#baff59"/><stop offset=".327" stop-color="#e9ff5a"/><stop offset=".345" stop-color="#ffe551"/><stop offset=".364" stop-color="#ffc044"/><stop offset=".382" stop-color="#ffa23a"/><stop offset=".418" stop-color="#ff782c"/><stop offset=".473" stop-color="#ff4e1e"/><stop offset=".545" stop-color="#ff2d12"/><stop offset=".655" stop-color="#ff0f08"/><stop offset=".764" stop-color="#ff0002"/><stop offset="1" stop-color="#ff0000"/></linearGradient><linearGradient id="g11" gradientUnits="userSpaceOnUse" x1="1679" x2="2546"><stop offset="0" stop-color="#00ff5f"/><stop offset=".218" stop-color="#00ff67"/><stop offset=".255" stop-color="#42ff69"/><stop offset=".291" stop-color="#8fff6c"/><stop offset=".327" stop-color="#ebff6e"/><stop offset=".345" stop-color="#ffe363"/><stop offset=".364" stop-color="#ffbd54"/><stop offset=".4" stop-color="#ff883f"/><stop offset=".436" stop-color="#ff6531"/><stop offset=".509" stop-color="#ff391f"/><stop offset=".618" stop-color="#ff1610"/><stop offset=".745" stop-color="#ff0007"/><stop offset="1" stop-color="#ff0000"/></linearGradient><linearGradient id="g12" gradientUnits="userSpaceOnUse" x1="1679" x2="2546"><stop offset="0" stop-color="#00ff6b"/><stop offset=".218" stop-color="#00ff78"/><stop offset=".236" stop-color="#1dff7a"/><stop offset=".291" stop-color="#8fff7f"/><stop offset=".327" stop-color="#edff84"/><stop offset=".345" stop-color="#ffe076"/><stop offset=".364" stop-color="#ffba64"/><stop offset=".4" stop-color="#ff864c"/><stop offset=".436" stop-color="#ff633b"/><stop offset=".509" stop-color="#ff3727"/><stop offset=".618" stop-color="#ff1416"/><stop offset=".745" stop-color="#ff000b"/><stop offset="1" stop-color="#ff0000"/></linearGradient><linearGradient id="g13" gradientUnits="userSpaceOnUse" x1="1679" x2="2546"><stop offset="0" stop-color="#00ff77"/><stop offset=".218" stop-color="#00ff89"/><stop offset=".236" stop-color="#1bff8c"/><stop offset=".273" stop-color="#65ff91"/><stop offset=".309" stop-color="#bdff97"/><stop offset=".327" stop-color="#efff9a"/><stop offset=".345" stop-color="#ffde89"/><stop offset=".364" stop-color="#ffb875"/><stop offset=".382" stop-color="#ff9a65"/><stop offset=".418" stop-color="#ff704e"/><stop offset=".473" stop-color="#ff4838"/><stop offset=".545" stop-color="#ff2727"/><stop offset=".673" stop-color="#ff0716"/><stop offset=".745" stop-color="#ff000f"/><stop offset="1" stop-color="#ff0003"/></linearGradient><linearGradient id="g14" gradientUnits="userSpaceOnUse" x1="1679" x2="2546"><stop offset="0" stop-color="#00ff83"/><stop offset=".218" stop-color="#00ff9c"/><stop offset=".236" stop-color="#18ff9f"/><stop offset=".273" stop-color="#64ffa5"/><stop offset=".309" stop-color="#beffad"/><stop offset=".327" stop-color="#f1ffb2"/><stop offset=".345" stop-color="#ffdb9d"/><stop offset=".364" stop-color="#ffb586"/><stop offset=".4" stop-color="#ff8166"/><stop offset=".436" stop-color="#ff5e51"/><stop offset=".509" stop-color="#ff3336"/><stop offset=".618" stop-color="#ff1121"/><stop offset=".727" stop-color="#ff0015"/><stop offset="1" stop-color="#ff0006"/></linearGradient><linearGradient id="g15" gradientUnits="userSpaceOnUse" x1="1680" x2="2546"><stop offset="0" stop-color="#00ff90"/><stop offset=".2" stop-color="#00ffab"/><stop offset=".218" stop-color="#00ffaf"/><stop offset=".236" stop-color="#18ffb2"/><stop offset=".273" stop-color="#65ffbb"/><stop offset=".309" stop-color="#c1ffc5"/><stop offset=".327" stop-color="#f6ffcb"/><stop offset=".345" stop-color="#ffd6b0"/><stop offset=".364" stop-color="#ffb196"/><stop offset=".4" stop-color="#ff7d73"/><stop offset=".436" stop-color="#ff5b5b"/><stop offset=".509" stop-color="#ff313e"/><stop offset=".618" stop-color="#ff0f27"/><stop offset=".709" stop-color="#ff001b"/><stop offset="1" stop-color="#ff0009"/></linearGradient><linearGradient id="g16" gradientUnits="userSpaceOnUse" x1="1682" x2="2546"><stop offset="0" stop-color="#00ff9d"/><stop offset=".204" stop-color="#00ffbf"/><stop offset=".222" stop-color="#00ffc4"/><stop offset=".259" stop-color="#4affce"/><stop offset=".296" stop-color="#a4ffda"/><stop offset=".315" stop-color="#d8ffe1"/><stop offset=".333" stop-color="#ffeed9"/><stop offset=".352" stop-color="#ffc1b7"/><stop offset=".37" stop-color="#ffa09d"/><stop offset=".407" stop-color="#ff7179"/><stop offset=".463" stop-color="#ff4658"/><stop offset=".519" stop-color="#ff2b43"/><stop offset=".63" stop-color="#ff0b2b"/><stop offset=".704" stop-color="#ff0021"/><stop offset=".963" stop-color="#ff000d"/><stop offset="1" stop-color="#ff000c"/></linearGradient><linearGradient id="g17" gradientUnits="userSpaceOnUse" x1="1684" x2="2546"><stop offset="0" stop-color="#00ffab"/><stop offset=".185" stop-color="#00ffce"/><stop offset=".222" stop-color="#00ffd9"/><stop offset=".259" stop-color="#4cffe5"/><stop offset=".296" stop-color="#a9fff4"/><stop offset=".315" stop-color="#defffc"/><stop offset=".333" stop-color="#ffe7ed"/><stop offset=".352" stop-color="#ffbbc8"/><stop offset=".37" stop-color="#ff9aac"/><stop offset=".407" stop-color="#ff6d85"/><stop offset=".463" stop-color="#ff4261"/><stop offset=".537" stop-color="#ff2145"/><stop offset=".667" stop-color="#ff022a"/><stop offset=".944" stop-color="#ff0011"/><stop offset="1" stop-color="#ff000f"/></linearGradient><linearGradient id="g18" gradientUnits="userSpaceOnUse" x1="1686" x2="2546"><stop offset="0" stop-color="#00ffb9"/><stop offset=".167" stop-color="#00ffdd"/><stop offset=".222" stop-color="#00ffef"/><stop offset=".259" stop-color="#4ffffd"/><stop offset=".333" stop-color="#fddeff"/><stop offset=".352" stop-color="#ffb5d9"/><stop offset=".37" stop-color="#ff95bb"/><stop offset=".407" stop-color="#ff6891"/><stop offset=".463" stop-color="#ff3f6a"/><stop offset=".556" stop-color="#ff1946"/><stop offset=".667" stop-color="#ff002f"/><stop offset=".907" stop-color="#ff0017"/><stop offset="1" stop-color="#ff0011"/></linearGradient><linearGradient id="g19" gradientUnits="userSpaceOnUse" x1="1689" x2="2541"><stop offset="0" stop-color="#00ffc8"/><stop offset=".148" stop-color="#00ffeb"/><stop offset=".204" stop-color="#00ffff"/><stop offset=".222" stop-color="#00f8ff"/><stop offset=".296" stop-color="#97d9ff"/><stop offset=".333" stop-color="#e9c8ff"/><stop offset=".352" stop-color="#ffb1ec"/><stop offset=".37" stop-color="#ff92cc"/><stop offset=".407" stop-color="#ff669e"/><stop offset=".463" stop-color="#ff3d74"/><stop offset=".537" stop-color="#ff1d54"/><stop offset=".667" stop-color="#ff0035"/><stop offset=".926" stop-color="#ff0019"/><stop offset="1" stop-color="#ff0015"/></linearGradient><linearGradient id="g20" gradientUnits="userSpaceOnUse" x1="1692" x2="2533"><stop offset="0" stop-color="#00ffd7"/><stop offset=".151" stop-color="#00fdff"/><stop offset=".208" stop-color="#00e9ff"/><stop offset=".226" stop-color="#05e2ff"/><stop offset=".302" stop-color="#94c4ff"/><stop offset=".34" stop-color="#e2b3ff"/><stop offset=".358" stop-color="#ffa4f5"/><stop offset=".377" stop-color="#ff87d4"/><stop offset=".415" stop-color="#ff5ea6"/><stop offset=".472" stop-color="#ff377b"/><stop offset=".566" stop-color="#ff1453"/><stop offset=".66" stop-color="#ff003c"/><stop offset=".849" stop-color="#ff0023"/><stop offset="1" stop-color="#ff0018"/></linearGradient><linearGradient id="g21" gradientUnits="userSpaceOnUse" x1="1695" x2="2525"><stop offset="0" stop-color="#00ffe7"/><stop offset=".096" stop-color="#00fcff"/><stop offset=".212" stop-color="#00d5ff"/><stop offset=".231" stop-color="#0aceff"/><stop offset=".327" stop-color="#b7a9ff"/><stop offset=".365" stop-color="#ff97fd"/><stop offset=".385" stop-color="#ff7cdc"/><stop offset=".423" stop-color="#ff56ad"/><stop offset=".481" stop-color="#ff3281"/><stop offset=".558" stop-color="#ff155e"/><stop offset=".654" stop-color="#ff0044"/><stop offset=".846" stop-color="#ff0028"/><stop offset="1" stop-color="#ff001c"/></linearGradient><linearGradient id="g22" gradientUnits="userSpaceOnUse" x1="1698" x2="2517"><stop offset="0" stop-color="#00fff8"/><stop offset=".058" stop-color="#00f6ff"/><stop offset=".212" stop-color="#00c5ff"/><stop offset=".231" stop-color="#08beff"/><stop offset=".327" stop-color="#a89aff"/><stop offset=".365" stop-color="#ed8bff"/><stop offset=".385" stop-color="#ff7bef"/><stop offset=".423" stop-color="#ff54bc"/><stop offset=".481" stop-color="#ff318c"/><stop offset=".558" stop-color="#ff1467"/><stop offset=".654" stop-color="#ff004b"/><stop offset=".827" stop-color="#ff002f"/><stop offset="1" stop-color="#ff001f"/></linearGradient><linearGradient id="g23" gradientUnits="userSpaceOnUse" x1="1701" x2="2510"><stop offset="0" stop-color="#00f5ff"/><stop offset=".216" stop-color="#00b5ff"/><stop offset=".235" stop-color="#0daeff"/><stop offset=".333" stop-color="#a58bff"/><stop offset=".373" stop-color="#e77cff"/><stop offset=".392" stop-color="#ff70f6"/><stop offset=".412" stop-color="#ff5dd9"/><stop offset=".451" stop-color="#ff40af"/><stop offset=".51" stop-color="#ff2386"/><stop offset=".608" stop-color="#ff075e"/><stop offset=".667" stop-color="#ff004f"/><stop offset=".824" stop-color="#ff0034"/><stop offset="1" stop-color="#ff0023"/></linearGradient><linearGradient id="g24" gradientUnits="userSpaceOnUse" x1="1704" x2="2502"><stop offset="0" stop-color="#00e5ff"/><stop offset=".22" stop-color="#00a6ff"/><stop offset=".24" stop-color="#11a0ff"/><stop offset=".36" stop-color="#c276ff"/><stop offset=".4" stop-color="#ff66fc"/><stop offset=".44" stop-color="#ff45c8"/><stop offset=".5" stop-color="#ff2697"/><stop offset=".58" stop-color="#ff0c70"/><stop offset=".66" stop-color="#ff0057"/><stop offset=".84" stop-color="#ff0037"/><stop offset="1" stop-color="#ff0027"/></linearGradient><linearGradient id="g25" gradientUnits="userSpaceOnUse" x1="1707" x2="2494"><stop offset="0" stop-color="#00d7ff"/><stop offset=".22" stop-color="#009aff"/><stop offset=".24" stop-color="#0f94ff"/><stop offset=".36" stop-color="#b46dff"/><stop offset=".4" stop-color="#ef5fff"/><stop offset=".42" stop-color="#ff53f1"/><stop offset=".46" stop-color="#ff38c3"/><stop offset=".52" stop-color="#ff1d97"/><stop offset=".6" stop-color="#ff0771"/><stop offset=".66" stop-color="#ff005e"/><stop offset=".82" stop-color="#ff003f"/><stop offset="1" stop-color="#ff002b"/></linearGradient><linearGradient id="g26" gradientUnits="userSpaceOnUse" x1="1710" x2="2486"><stop offset="0" stop-color="#00caff"/><stop offset=".224" stop-color="#008eff"/><stop offset=".245" stop-color="#1288ff"/><stop offset=".388" stop-color="#ce5bff"/><stop offset=".408" stop-color="#ea54ff"/><stop offset=".429" stop-color="#ff4af7"/><stop offset=".469" stop-color="#ff31c9"/><stop offset=".531" stop-color="#ff189b"/><stop offset=".612" stop-color="#ff0375"/><stop offset=".755" stop-color="#ff004f"/><stop offset="1" stop-color="#ff002f"/></linearGradient><linearGradient id="g27" gradientUnits="userSpaceOnUse" x1="1713" x2="2478"><stop offset="0" stop-color="#00beff"/><stop offset=".229" stop-color="#0083ff"/><stop offset=".354" stop-color="#955eff"/><stop offset=".438" stop-color="#ff42fb"/><stop offset=".479" stop-color="#ff2bcd"/><stop offset=".542" stop-color="#ff13a0"/><stop offset=".625" stop-color="#ff0079"/><stop offset=".75" stop-color="#ff0057"/><stop offset=".979" stop-color="#ff0035"/><stop offset="1" stop-color="#ff0033"/></linearGradient><linearGradient id="g28" gradientUnits="userSpaceOnUse" x1="1717" x2="2471"><stop offset="0" stop-color="#00b2ff"/><stop offset=".229" stop-color="#007aff"/><stop offset=".354" stop-color="#8c57ff"/><stop offset=".438" stop-color="#f33dff"/><stop offset=".458" stop-color="#ff34f1"/><stop offset=".5" stop-color="#ff20c9"/><stop offset=".562" stop-color="#ff0c9f"/><stop offset=".625" stop-color="#ff0082"/><stop offset=".75" stop-color="#ff005d"/><stop offset=".958" stop-color="#ff003c"/><stop offset="1" stop-color="#ff0038"/></linearGradient><linearGradient id="g29" gradientUnits="userSpaceOnUse" x1="1720" x2="2463"><stop offset="0" stop-color="#00a7ff"/><stop offset=".234" stop-color="#0370ff"/><stop offset=".383" stop-color="#a448ff"/><stop offset=".447" stop-color="#ef35ff"/><stop offset=".468" stop-color="#ff2df6"/><stop offset=".511" stop-color="#ff1bcd"/><stop offset=".574" stop-color="#ff08a3"/><stop offset=".638" stop-color="#ff0086"/><stop offset=".766" stop-color="#ff0060"/><stop offset="1" stop-color="#ff003c"/></linearGradient><linearGradient id="g30" gradientUnits="userSpaceOnUse" x1="1724" x2="2455"><stop offset="0" stop-color="#009eff"/><stop offset=".217" stop-color="#006cff"/><stop offset=".239" stop-color="#0767ff"/><stop offset=".413" stop-color="#bb3aff"/><stop offset=".457" stop-color="#ec2dff"/><stop offset=".478" stop-color="#ff26f9"/><stop offset=".522" stop-color="#ff15d1"/><stop offset=".587" stop-color="#ff04a6"/><stop offset=".674" stop-color="#ff0081"/><stop offset=".826" stop-color="#ff005a"/><stop offset="1" stop-color="#ff0041"/></linearGradient><linearGradient id="g31" gradientUnits="userSpaceOnUse" x1="1728" x2="2447"><stop offset="0" stop-color="#0094ff"/><stop offset=".222" stop-color="#0064ff"/><stop offset=".244" stop-color="#0c5fff"/><stop offset=".422" stop-color="#ba32ff"/><stop offset=".489" stop-color="#ff20fd"/><stop offset=".533" stop-color="#ff10d4"/><stop offset=".6" stop-color="#ff00aa"/><stop offset=".711" stop-color="#ff007d"/><stop offset=".889" stop-color="#ff0055"/><stop offset="1" stop-color="#ff0046"/></linearGradient><linearGradient id="g32" gradientUnits="userSpaceOnUse" x1="1731" x2="2439"><stop offset="0" stop-color="#008cff"/><stop offset=".222" stop-color="#005dff"/><stop offset=".244" stop-color="#0b58ff"/><stop offset=".422" stop-color="#b02eff"/><stop offset=".489" stop-color="#f21cff"/><stop offset=".511" stop-color="#ff16f5"/><stop offset=".578" stop-color="#ff03c1"/><stop offset=".667" stop-color="#ff0095"/><stop offset=".8" stop-color="#ff006d"/><stop offset="1" stop-color="#ff004b"/></linearGradient><linearGradient id="g33" gradientUnits="userSpaceOnUse" x1="1735" x2="2432"><stop offset="0" stop-color="#0084ff"/><stop offset=".227" stop-color="#0056ff"/><stop offset=".273" stop-color="#214cff"/><stop offset=".477" stop-color="#da1cff"/><stop offset=".5" stop-color="#f016ff"/><stop offset=".523" stop-color="#ff10f8"/><stop offset=".591" stop-color="#ff00c5"/><stop offset=".682" stop-color="#ff0098"/><stop offset=".818" stop-color="#ff0070"/><stop offset="1" stop-color="#ff0050"/></linearGradient><linearGradient id="g34" gradientUnits="userSpaceOnUse" x1="1739" x2="2424"><stop offset="0" stop-color="#007cff"/><stop offset=".233" stop-color="#004fff"/><stop offset=".442" stop-color="#ae21ff"/><stop offset=".535" stop-color="#ff0bfb"/><stop offset=".581" stop-color="#ff00d7"/><stop offset=".674" stop-color="#ff00a5"/><stop offset=".791" stop-color="#ff007e"/><stop offset=".953" stop-color="#ff005c"/><stop offset="1" stop-color="#ff0055"/></linearGradient><linearGradient id="g35" gradientUnits="userSpaceOnUse" x1="1742" x2="2416"><stop offset="0" stop-color="#0075ff"/><stop offset=".233" stop-color="#004aff"/><stop offset=".395" stop-color="#7e28ff"/><stop offset=".535" stop-color="#f509ff"/><stop offset=".558" stop-color="#ff03f5"/><stop offset=".628" stop-color="#ff00c6"/><stop offset=".721" stop-color="#ff009c"/><stop offset=".86" stop-color="#ff0074"/><stop offset="1" stop-color="#ff005b"/></linearGradient><linearGradient id="g36" gradientUnits="userSpaceOnUse" x1="1746" x2="2408"><stop offset="0" stop-color="#006eff"/><stop offset=".238" stop-color="#0343ff"/><stop offset=".476" stop-color="#b813ff"/><stop offset=".548" stop-color="#f304ff"/><stop offset=".571" stop-color="#ff00f7"/><stop offset=".643" stop-color="#ff00c8"/><stop offset=".762" stop-color="#ff0096"/><stop offset=".929" stop-color="#ff006d"/><stop offset="1" stop-color="#ff0061"/></linearGradient><linearGradient id="g37" gradientUnits="userSpaceOnUse" x1="1751" x2="2400"><stop offset="0" stop-color="#0068ff"/><stop offset=".22" stop-color="#0042ff"/><stop offset=".244" stop-color="#073dff"/><stop offset=".488" stop-color="#b80eff"/><stop offset=".561" stop-color="#f100ff"/><stop offset=".585" stop-color="#ff00fa"/><stop offset=".659" stop-color="#ff00cb"/><stop offset=".756" stop-color="#ff00a1"/><stop offset=".902" stop-color="#ff0079"/><stop offset="1" stop-color="#ff0067"/></linearGradient><linearGradient id="g38" gradientUnits="userSpaceOnUse" x1="1755" x2="2393"><stop offset="0" stop-color="#0061ff"/><stop offset=".225" stop-color="#003cff"/><stop offset=".275" stop-color="#1b33ff"/><stop offset=".525" stop-color="#ca05ff"/><stop offset=".575" stop-color="#f000ff"/><stop offset=".6" stop-color="#ff00fb"/><stop offset=".7" stop-color="#ff00c1"/><stop offset=".825" stop-color="#ff0093"/><stop offset="1" stop-color="#ff006d"/></linearGradient><linearGradient id="g39" gradientUnits="userSpaceOnUse" x1="1760" x2="2385"><stop offset="0" stop-color="#005bff"/><stop offset=".225" stop-color="#0038ff"/><stop offset=".3" stop-color="#2a2bff"/><stop offset=".55" stop-color="#d200ff"/><stop offset=".6" stop-color="#f600ff"/><stop offset=".625" stop-color="#ff00f6"/><stop offset=".725" stop-color="#ff00c0"/><stop offset=".85" stop-color="#ff0094"/><stop offset="1" stop-color="#ff0073"/></linearGradient><linearGradient id="g40" gradientUnits="userSpaceOnUse" x1="1764" x2="2377"><stop offset="0" stop-color="#0056ff"/><stop offset=".231" stop-color="#0033ff"/><stop offset=".513" stop-color="#af03ff"/><stop offset=".615" stop-color="#f400ff"/><stop offset=".641" stop-color="#ff00f8"/><stop offset=".718" stop-color="#ff00cd"/><stop offset=".846" stop-color="#ff009e"/><stop offset="1" stop-color="#ff007a"/></linearGradient><linearGradient id="g41" gradientUnits="userSpaceOnUse" x1="1768" x2="2369"><stop offset="0" stop-color="#0051ff"/><stop offset=".237" stop-color="#032eff"/><stop offset=".526" stop-color="#af00ff"/><stop offset=".632" stop-color="#f300ff"/><stop offset=".658" stop-color="#ff00fa"/><stop offset=".737" stop-color="#ff00cf"/><stop offset=".868" stop-color="#ff00a0"/><stop offset="1" stop-color="#ff0081"/></linearGradient><linearGradient id="g42" gradientUnits="userSpaceOnUse" x1="1773" x2="2361"><stop offset="0" stop-color="#004bff"/><stop offset=".216" stop-color="#002dff"/><stop offset=".243" stop-color="#0729ff"/><stop offset=".514" stop-color="#9f00ff"/><stop offset=".649" stop-color="#f200ff"/><stop offset=".676" stop-color="#ff00fb"/><stop offset=".757" stop-color="#ff00d1"/><stop offset=".865" stop-color="#ff00a9"/><stop offset="1" stop-color="#ff0088"/></linearGradient><linearGradient id="g43" gradientUnits="userSpaceOnUse" x1="1777" x2="2354"><stop offset="0" stop-color="#0047ff"/><stop offset=".216" stop-color="#002aff"/><stop offset=".243" stop-color="#0626ff"/><stop offset=".514" stop-color="#9800ff"/><stop offset=".676" stop-color="#f600ff"/><stop offset=".703" stop-color="#ff00f7"/><stop offset=".838" stop-color="#ff00bb"/><stop offset="1" stop-color="#ff008f"/></linearGradient><linearGradient id="g44" gradientUnits="userSpaceOnUse" x1="1782" x2="2346"><stop offset="0" stop-color="#0042ff"/><stop offset=".222" stop-color="#0025ff"/><stop offset=".333" stop-color="#3316ff"/><stop offset=".5" stop-color="#8a00ff"/><stop offset=".694" stop-color="#f500ff"/><stop offset=".722" stop-color="#ff00f9"/><stop offset=".833" stop-color="#ff00c7"/><stop offset=".972" stop-color="#ff009e"/><stop offset="1" stop-color="#ff0097"/></linearGradient><linearGradient id="g45" gradientUnits="userSpaceOnUse" x1="1786" x2="2338"><stop offset="0" stop-color="#003eff"/><stop offset=".229" stop-color="#0021ff"/><stop offset=".486" stop-color="#7c00ff"/><stop offset=".714" stop-color="#f400ff"/><stop offset=".743" stop-color="#ff00fa"/><stop offset=".857" stop-color="#ff00c8"/><stop offset="1" stop-color="#ff009f"/></linearGradient><linearGradient id="g46" gradientUnits="userSpaceOnUse" x1="1791" x2="2330"><stop offset="0" stop-color="#0039ff"/><stop offset=".235" stop-color="#031dff"/><stop offset=".471" stop-color="#7000ff"/><stop offset=".735" stop-color="#f400ff"/><stop offset=".765" stop-color="#ff00fb"/><stop offset=".882" stop-color="#ff00ca"/><stop offset="1" stop-color="#ff00a8"/></linearGradient><linearGradient id="g47" gradientUnits="userSpaceOnUse" x1="1796" x2="2322"><stop offset="0" stop-color="#0035ff"/><stop offset=".212" stop-color="#001dff"/><stop offset=".242" stop-color="#071aff"/><stop offset=".455" stop-color="#6400ff"/><stop offset=".788" stop-color="#ff00fc"/><stop offset=".909" stop-color="#ff00cb"/><stop offset="1" stop-color="#ff00b0"/></linearGradient><linearGradient id="g48" gradientUnits="userSpaceOnUse" x1="1801" x2="2315"><stop offset="0" stop-color="#0031ff"/><stop offset=".212" stop-color="#001aff"/><stop offset=".273" stop-color="#1313ff"/><stop offset=".455" stop-color="#6000ff"/><stop offset=".788" stop-color="#f600ff"/><stop offset=".818" stop-color="#ff00fa"/><stop offset=".939" stop-color="#ff00cb"/><stop offset="1" stop-color="#ff00ba"/></linearGradient><linearGradient id="g49" gradientUnits="userSpaceOnUse" x1="1806" x2="2307"><stop offset="0" stop-color="#002eff"/><stop offset=".219" stop-color="#0017ff"/><stop offset=".438" stop-color="#5500ff"/><stop offset=".812" stop-color="#f600ff"/><stop offset=".844" stop-color="#ff00fa"/><stop offset="1" stop-color="#ff00c3"/></linearGradient><linearGradient id="g50" gradientUnits="userSpaceOnUse" x1="1811" x2="2299"><stop offset="0" stop-color="#002aff"/><stop offset=".226" stop-color="#0113ff"/><stop offset=".419" stop-color="#4a00ff"/><stop offset=".839" stop-color="#f500ff"/><stop offset=".871" stop-color="#ff00fb"/><stop offset="1" stop-color="#ff00ce"/></linearGradient><linearGradient id="g51" gradientUnits="userSpaceOnUse" x1="1816" x2="2291"><stop offset="0" stop-color="#0026ff"/><stop offset=".2" stop-color="#0013ff"/><stop offset=".267" stop-color="#100dff"/><stop offset=".433" stop-color="#4c00ff"/><stop offset=".867" stop-color="#f500ff"/><stop offset=".9" stop-color="#ff00fb"/><stop offset="1" stop-color="#ff00d8"/></linearGradient><linearGradient id="g52" gradientUnits="userSpaceOnUse" x1="1821" x2="2283"><stop offset="0" stop-color="#0023ff"/><stop offset=".207" stop-color="#0010ff"/><stop offset=".345" stop-color="#2b03ff"/><stop offset=".828" stop-color="#da00ff"/><stop offset=".931" stop-color="#ff00fc"/><stop offset="1" stop-color="#ff00e3"/></linearGradient><linearGradient id="g53" gradientUnits="userSpaceOnUse" x1="1826" x2="2276"><stop offset="0" stop-color="#0020ff"/><stop offset=".207" stop-color="#000eff"/><stop offset=".379" stop-color="#3500ff"/><stop offset=".897" stop-color="#e900ff"/><stop offset=".966" stop-color="#ff00fb"/><stop offset="1" stop-color="#ff00ef"/></linearGradient><linearGradient id="g54" gradientUnits="userSpaceOnUse" x1="1831" x2="2268"><stop offset="0" stop-color="#001dff"/><stop offset=".214" stop-color="#000bff"/><stop offset=".357" stop-color="#2c00ff"/><stop offset=".857" stop-color="#d000ff"/><stop offset="1" stop-color="#ff00fc"/></linearGradient><linearGradient id="g55" gradientUnits="userSpaceOnUse" x1="1836" x2="2260"><stop offset="0" stop-color="#001aff"/><stop offset=".222" stop-color="#0308ff"/><stop offset=".37" stop-color="#2e00ff"/><stop offset=".963" stop-color="#e900ff"/><stop offset="1" stop-color="#f600ff"/></linearGradient><linearGradient id="g56" gradientUnits="userSpaceOnUse" x1="1842" x2="2252"><stop offset="0" stop-color="#0017ff"/><stop offset=".192" stop-color="#0008ff"/><stop offset=".269" stop-color="#1102ff"/><stop offset=".885" stop-color="#c500ff"/><stop offset="1" stop-color="#e900ff"/></linearGradient><linearGradient id="g57" gradientUnits="userSpaceOnUse" x1="1848" x2="2244"><stop offset="0" stop-color="#0014ff"/><stop offset=".2" stop-color="#0005ff"/><stop offset=".4" stop-color="#3400ff"/><stop offset="1" stop-color="#de00ff"/></linearGradient><linearGradient id="g58" gradientUnits="userSpaceOnUse" x1="1853" x2="2237"><stop offset="0" stop-color="#0011ff"/><stop offset=".208" stop-color="#0203ff"/><stop offset=".917" stop-color="#bb00ff"/><stop offset="1" stop-color="#d300ff"/></linearGradient><linearGradient id="g59" gradientUnits="userSpaceOnUse" x1="1859" x2="2229"><stop offset="0" stop-color="#000eff"/><stop offset=".208" stop-color="#0301ff"/><stop offset=".958" stop-color="#bd00ff"/><stop offset="1" stop-color="#c800ff"/></linearGradient><linearGradient id="g60" gradientUnits="userSpaceOnUse" x1="1865" x2="2221"><stop offset="0" stop-color="#000cff"/><stop offset=".174" stop-color="#0001ff"/><stop offset=".391" stop-color="#2d00ff"/><stop offset="1" stop-color="#be00ff"/></linearGradient><linearGradient id="g61" gradientUnits="userSpaceOnUse" x1="1871" x2="2213"><stop offset="0" stop-color="#0009ff"/><stop offset=".182" stop-color="#0000ff"/><stop offset=".955" stop-color="#a900ff"/><stop offset="1" stop-color="#b400ff"/></linearGradient><linearGradient id="g62" gradientUnits="userSpaceOnUse" x1="1876" x2="2205"><stop offset="0" stop-color="#0007ff"/><stop offset=".19" stop-color="#0200ff"/><stop offset="1" stop-color="#ab00ff"/></linearGradient><linearGradient id="g63" gradientUnits="userSpaceOnUse" x1="1883" x2="2197"><stop offset="0" stop-color="#0004ff"/><stop offset=".15" stop-color="#0000ff"/><stop offset=".5" stop-color="#3e00ff"/><stop offset="1" stop-color="#a200ff"/></linearGradient><linearGradient id="g64" gradientUnits="userSpaceOnUse" x1="1890" x2="2190"><stop offset="0" stop-color="#0002ff"/><stop offset=".158" stop-color="#0000ff"/><stop offset="1" stop-color="#9900ff"/></linearGradient><linearGradient id="g65" gradientUnits="userSpaceOnUse" x1="1896" x2="2182"><stop offset="0" stop-color="#0000ff"/><stop offset=".167" stop-color="#0300ff"/><stop offset="1" stop-color="#9100ff"/></linearGradient><linearGradient id="g66" gradientUnits="userSpaceOnUse" x1="1903" x2="2174"><stop offset="0" stop-color="#0000ff"/><stop offset=".118" stop-color="#0000ff"/><stop offset=".765" stop-color="#6200ff"/><stop offset="1" stop-color="#8900ff"/></linearGradient><linearGradient id="g67" gradientUnits="userSpaceOnUse" x1="1910" x2="2166"><stop offset="0" stop-color="#0000ff"/><stop offset=".118" stop-color="#0000ff"/><stop offset="1" stop-color="#8100ff"/></linearGradient><linearGradient id="g68" gradientUnits="userSpaceOnUse" x1="1917" x2="2158"><stop offset="0" stop-color="#0000ff"/><stop offset=".125" stop-color="#0200ff"/><stop offset="1" stop-color="#7a00ff"/></linearGradient><linearGradient id="g69" gradientUnits="userSpaceOnUse" x1="1925" x2="2151"><stop offset="0" stop-color="#0000ff"/><stop offset=".133" stop-color="#0600ff"/><stop offset="1" stop-color="#7200ff"/></linearGradient><linearGradient id="g70" gradientUnits="userSpaceOnUse" x1="1933" x2="2143"><stop offset="0" stop-color="#0000ff"/><stop offset=".071" stop-color="#0100ff"/><stop offset="1" stop-color="#6b00ff"/></linearGradient><linearGradient id="g71" gradientUnits="userSpaceOnUse" x1="1941" x2="2135"><stop offset="0" stop-color="#0000ff"/><stop offset=".615" stop-color="#3c00ff"/><stop offset="1" stop-color="#6500ff"/></linearGradient><linearGradient id="g72" gradientUnits="userSpaceOnUse" x1="1949" x2="2127"><stop offset="0" stop-color="#0100ff"/><stop offset="1" stop-color="#5e00ff"/></linearGradient><linearGradient id="g73" gradientUnits="userSpaceOnUse" x1="1958" x2="2119"><stop offset="0" stop-color="#0500ff"/><stop offset="1" stop-color="#5800ff"/></linearGradient><linearGradient id="g74" gradientUnits="userSpaceOnUse" x1="1968" x2="2112"><stop offset="0" stop-color="#0800ff"/><stop offset="1" stop-color="#5200ff"/></linearGradient><linearGradient id="g75" gradientUnits="userSpaceOnUse" x1="1977" x2="2104"><stop offset="0" stop-color="#0c00ff"/><stop offset="1" stop-color="#4c00ff"/></linearGradient><linearGradient id="g76" gradientUnits="userSpaceOnUse" x1="1987" x2="2096"><stop offset="0" stop-color="#1000ff"/><stop offset="1" stop-color="#4600ff"/></linearGradient><linearGradient id="g77" gradientUnits="userSpaceOnUse" x1="1997" x2="2088"><stop offset="0" stop-color="#1400ff"/><stop offset="1" stop-color="#4100ff"/></linearGradient><linearGradient id="g78" gradientUnits="userSpaceOnUse" x1="2006" x2="2080"><stop offset="0" stop-color="#1800ff"/><stop offset="1" stop-color="#3c00ff"/></linearGradient><linearGradient id="g79" gradientUnits="userSpaceOnUse" x1="2016" x2="2073"><stop offset="0" stop-color="#1b00ff"/><stop offset="1" stop-color="#3600ff"/></linearGradient><linearGradient id="g80" gradientUnits="userSpaceOnUse" x1="2026" x2="2065"><stop offset="0" stop-color="#1f00ff"/><stop offset="1" stop-color="#3100ff"/></linearGradient><clipPath id="loc"><path d="M2049.6 938.5C2049.5 938.5 2049.4 938.5 2049.3 938.5C2049.2 938.6 2049.1 938.8 2049.0 938.9C2048.9 939.0 2048.7 938.8 2048.5 938.9C2048.3 939.0 2048.2 939.2 2048.0 939.3C2047.8 939.3 2047.5 939.3 2047.2 939.3C2047.0 939.3 2046.6 939.3 2046.3 939.3C2045.9 939.3 2045.6 939.5 2045.1 939.3C2044.5 939.1 2043.9 938.8 2042.9 938.2C2041.9 937.6 2040.6 936.8 2039.2 935.7C2037.7 934.7 2036.2 933.5 2034.1 931.9C2032.1 930.2 2029.6 928.2 2026.8 926.0C2024.1 923.7 2021.1 921.0 2017.6 918.1C2014.2 915.2 2010.5 912.2 2006.0 908.5C2001.5 904.9 1996.4 900.7 1990.8 896.1C1985.2 891.4 1979.2 886.7 1972.4 880.8C1965.6 874.8 1958.1 868.4 1949.9 860.5C1941.6 852.5 1933.3 844.8 1922.8 833.0C1912.3 821.2 1899.9 806.8 1886.9 789.7C1873.8 772.7 1859.2 752.8 1844.5 730.6C1829.8 708.5 1813.5 682.6 1798.5 657.1C1783.5 631.5 1767.4 603.5 1754.2 577.5C1741.1 551.5 1729.3 524.6 1719.6 501.1C1710.0 477.7 1702.1 455.5 1696.2 436.7C1690.2 418.0 1686.5 402.4 1684.0 388.9C1681.5 375.4 1680.8 364.9 1681.1 355.6C1681.4 346.2 1683.1 338.9 1685.7 332.7C1688.3 326.4 1692.3 321.8 1696.7 318.1C1701.2 314.5 1706.6 312.4 1712.4 310.7C1718.1 309.0 1724.5 308.6 1731.0 308.0C1737.4 307.4 1744.4 307.4 1751.2 307.3C1758.0 307.2 1764.8 307.4 1771.8 307.6C1778.8 307.8 1785.9 308.1 1793.3 308.6C1800.8 309.0 1808.4 309.6 1816.5 310.2C1824.5 310.9 1832.8 311.7 1841.6 312.5C1850.4 313.3 1859.6 314.3 1869.3 315.3C1879.0 316.3 1889.2 317.4 1899.9 318.6C1910.7 319.7 1921.9 321.0 1933.8 322.3C1945.7 323.7 1958.2 325.1 1971.3 326.6C1984.5 328.1 1998.2 329.6 2012.6 331.3C2026.9 332.9 2042.0 334.7 2057.6 336.4C2073.1 338.2 2089.4 340.1 2106.1 342.0C2122.7 343.9 2140.0 345.9 2157.4 347.9C2174.7 349.9 2192.8 352.0 2210.1 354.0C2227.4 355.9 2244.4 357.9 2261.2 359.8C2278.0 361.7 2295.1 363.7 2310.9 365.5C2326.7 367.3 2341.8 369.0 2356.0 370.6C2370.1 372.2 2383.5 373.8 2395.8 375.2C2408.1 376.6 2419.3 377.9 2429.7 379.1C2440.1 380.3 2449.4 381.4 2458.1 382.3C2466.8 383.3 2474.6 384.2 2482.0 385.1C2489.5 386.0 2496.4 386.8 2502.8 387.5C2509.1 388.2 2515.0 388.9 2520.3 389.5C2525.6 390.1 2530.3 390.6 2534.5 391.1C2538.7 391.6 2542.2 392.0 2545.5 392.4C2548.8 392.7 2551.6 393.1 2554.1 393.4C2556.6 393.6 2558.1 393.8 2560.5 394.1C2562.8 394.4 2565.9 394.7 2568.1 395.0C2570.3 395.2 2571.7 395.4 2573.5 395.6C2575.2 395.8 2577.7 396.1 2578.5 396.2Z"/></clipPath><clipPath id="plot"><rect x="1679.0" y="291.1" width="866.5" height="665.8"/></clipPath><filter id="vb" x="-2%" y="-2%" width="104%" height="104%"><feGaussianBlur stdDeviation="0 4"/></filter></defs><rect x="1679.0" y="291.1" width="866.5" height="665.8" fill="#222"/><g clip-path="url(#plot)"><g clip-path="url(#loc)"><g filter="url(#vb)"><rect x="1697" y="298.8" width="160" height="8.6" fill="url(#g0)"/><rect x="1684" y="306.8" width="248" height="8.6" fill="url(#g1)"/><rect x="1679" y="314.8" width="325" height="8.6" fill="url(#g2)"/><rect x="1679" y="322.8" width="394" height="8.6" fill="url(#g3)"/><rect x="1679" y="330.8" width="464" height="8.6" fill="url(#g4)"/><rect x="1679" y="338.8" width="534" height="8.6" fill="url(#g5)"/><rect x="1679" y="346.8" width="603" height="8.6" fill="url(#g6)"/><rect x="1679" y="354.8" width="674" height="8.6" fill="url(#g7)"/><rect x="1679" y="362.8" width="743" height="8.6" fill="url(#g8)"/><rect x="1679" y="370.8" width="813" height="8.6" fill="url(#g9)"/><rect x="1679" y="378.8" width="866" height="8.6" fill="url(#g10)"/><rect x="1679" y="386.8" width="866" height="8.6" fill="url(#g11)"/><rect x="1679" y="394.8" width="866" height="8.6" fill="url(#g12)"/><rect x="1679" y="402.8" width="866" height="8.6" fill="url(#g13)"/><rect x="1679" y="410.8" width="866" height="8.6" fill="url(#g14)"/><rect x="1680" y="418.8" width="865" height="8.6" fill="url(#g15)"/><rect x="1682" y="426.8" width="863" height="8.6" fill="url(#g16)"/><rect x="1684" y="434.8" width="861" height="8.6" fill="url(#g17)"/><rect x="1686" y="442.8" width="859" height="8.6" fill="url(#g18)"/><rect x="1689" y="450.8" width="852" height="8.6" fill="url(#g19)"/><rect x="1692" y="458.8" width="841" height="8.6" fill="url(#g20)"/><rect x="1695" y="466.8" width="830" height="8.6" fill="url(#g21)"/><rect x="1698" y="474.8" width="819" height="8.6" fill="url(#g22)"/><rect x="1701" y="482.8" width="809" height="8.6" fill="url(#g23)"/><rect x="1704" y="490.8" width="798" height="8.6" fill="url(#g24)"/><rect x="1707" y="498.8" width="787" height="8.6" fill="url(#g25)"/><rect x="1710" y="506.8" width="777" height="8.6" fill="url(#g26)"/><rect x="1713" y="514.8" width="765" height="8.6" fill="url(#g27)"/><rect x="1717" y="522.8" width="754" height="8.6" fill="url(#g28)"/><rect x="1720" y="530.8" width="742" height="8.6" fill="url(#g29)"/><rect x="1724" y="538.8" width="731" height="8.6" fill="url(#g30)"/><rect x="1728" y="546.8" width="719" height="8.6" fill="url(#g31)"/><rect x="1731" y="554.8" width="708" height="8.6" fill="url(#g32)"/><rect x="1735" y="562.8" width="697" height="8.6" fill="url(#g33)"/><rect x="1739" y="570.8" width="685" height="8.6" fill="url(#g34)"/><rect x="1742" y="578.8" width="674" height="8.6" fill="url(#g35)"/><rect x="1746" y="586.8" width="662" height="8.6" fill="url(#g36)"/><rect x="1751" y="594.8" width="650" height="8.6" fill="url(#g37)"/><rect x="1755" y="602.8" width="637" height="8.6" fill="url(#g38)"/><rect x="1760" y="610.8" width="625" height="8.6" fill="url(#g39)"/><rect x="1764" y="618.8" width="613" height="8.6" fill="url(#g40)"/><rect x="1768" y="626.8" width="601" height="8.6" fill="url(#g41)"/><rect x="1773" y="634.8" width="588" height="8.6" fill="url(#g42)"/><rect x="1777" y="642.8" width="576" height="8.6" fill="url(#g43)"/><rect x="1782" y="650.8" width="564" height="8.6" fill="url(#g44)"/><rect x="1786" y="658.8" width="552" height="8.6" fill="url(#g45)"/><rect x="1791" y="666.8" width="539" height="8.6" fill="url(#g46)"/><rect x="1796" y="674.8" width="526" height="8.6" fill="url(#g47)"/><rect x="1801" y="682.8" width="514" height="8.6" fill="url(#g48)"/><rect x="1806" y="690.8" width="501" height="8.6" fill="url(#g49)"/><rect x="1811" y="698.8" width="488" height="8.6" fill="url(#g50)"/><rect x="1816" y="706.8" width="475" height="8.6" fill="url(#g51)"/><rect x="1821" y="714.8" width="462" height="8.6" fill="url(#g52)"/><rect x="1826" y="722.8" width="449" height="8.6" fill="url(#g53)"/><rect x="1831" y="730.8" width="437" height="8.6" fill="url(#g54)"/><rect x="1836" y="738.8" width="424" height="8.6" fill="url(#g55)"/><rect x="1842" y="746.8" width="410" height="8.6" fill="url(#g56)"/><rect x="1848" y="754.8" width="397" height="8.6" fill="url(#g57)"/><rect x="1853" y="762.8" width="383" height="8.6" fill="url(#g58)"/><rect x="1859" y="770.8" width="369" height="8.6" fill="url(#g59)"/><rect x="1865" y="778.8" width="356" height="8.6" fill="url(#g60)"/><rect x="1871" y="786.8" width="342" height="8.6" fill="url(#g61)"/><rect x="1876" y="794.8" width="329" height="8.6" fill="url(#g62)"/><rect x="1883" y="802.8" width="314" height="8.6" fill="url(#g63)"/><rect x="1890" y="810.8" width="300" height="8.6" fill="url(#g64)"/><rect x="1896" y="818.8" width="286" height="8.6" fill="url(#g65)"/><rect x="1903" y="826.8" width="271" height="8.6" fill="url(#g66)"/><rect x="1910" y="834.8" width="257" height="8.6" fill="url(#g67)"/><rect x="1917" y="842.8" width="242" height="8.6" fill="url(#g68)"/><rect x="1925" y="850.8" width="226" height="8.6" fill="url(#g69)"/><rect x="1933" y="858.8" width="210" height="8.6" fill="url(#g70)"/><rect x="1941" y="866.8" width="194" height="8.6" fill="url(#g71)"/><rect x="1949" y="874.8" width="178" height="8.6" fill="url(#g72)"/><rect x="1958" y="882.8" width="161" height="8.6" fill="url(#g73)"/><rect x="1968" y="890.8" width="144" height="8.6" fill="url(#g74)"/><rect x="1977" y="898.8" width="127" height="8.6" fill="url(#g75)"/><rect x="1987" y="906.8" width="109" height="8.6" fill="url(#g76)"/><rect x="1997" y="914.8" width="92" height="8.6" fill="url(#g77)"/><rect x="2006" y="922.8" width="74" height="8.6" fill="url(#g78)"/><rect x="2016" y="930.8" width="57" height="8.6" fill="url(#g79)"/><rect x="2026" y="938.8" width="39" height="8.6" fill="url(#g80)"/></g><path d="M2049.6 938.5C2049.5 938.5 2049.4 938.5 2049.3 938.5C2049.2 938.6 2049.1 938.8 2049.0 938.9C2048.9 939.0 2048.7 938.8 2048.5 938.9C2048.3 939.0 2048.2 939.2 2048.0 939.3C2047.8 939.3 2047.5 939.3 2047.2 939.3C2047.0 939.3 2046.6 939.3 2046.3 939.3C2045.9 939.3 2045.6 939.5 2045.1 939.3C2044.5 939.1 2043.9 938.8 2042.9 938.2C2041.9 937.6 2040.6 936.8 2039.2 935.7C2037.7 934.7 2036.2 933.5 2034.1 931.9C2032.1 930.2 2029.6 928.2 2026.8 926.0C2024.1 923.7 2021.1 921.0 2017.6 918.1C2014.2 915.2 2010.5 912.2 2006.0 908.5C2001.5 904.9 1996.4 900.7 1990.8 896.1C1985.2 891.4 1979.2 886.7 1972.4 880.8C1965.6 874.8 1958.1 868.4 1949.9 860.5C1941.6 852.5 1933.3 844.8 1922.8 833.0C1912.3 821.2 1899.9 806.8 1886.9 789.7C1873.8 772.7 1859.2 752.8 1844.5 730.6C1829.8 708.5 1813.5 682.6 1798.5 657.1C1783.5 631.5 1767.4 603.5 1754.2 577.5C1741.1 551.5 1729.3 524.6 1719.6 501.1C1710.0 477.7 1702.1 455.5 1696.2 436.7C1690.2 418.0 1686.5 402.4 1684.0 388.9C1681.5 375.4 1680.8 364.9 1681.1 355.6C1681.4 346.2 1683.1 338.9 1685.7 332.7C1688.3 326.4 1692.3 321.8 1696.7 318.1C1701.2 314.5 1706.6 312.4 1712.4 310.7C1718.1 309.0 1724.5 308.6 1731.0 308.0C1737.4 307.4 1744.4 307.4 1751.2 307.3C1758.0 307.2 1764.8 307.4 1771.8 307.6C1778.8 307.8 1785.9 308.1 1793.3 308.6C1800.8 309.0 1808.4 309.6 1816.5 310.2C1824.5 310.9 1832.8 311.7 1841.6 312.5C1850.4 313.3 1859.6 314.3 1869.3 315.3C1879.0 316.3 1889.2 317.4 1899.9 318.6C1910.7 319.7 1921.9 321.0 1933.8 322.3C1945.7 323.7 1958.2 325.1 1971.3 326.6C1984.5 328.1 1998.2 329.6 2012.6 331.3C2026.9 332.9 2042.0 334.7 2057.6 336.4C2073.1 338.2 2089.4 340.1 2106.1 342.0C2122.7 343.9 2140.0 345.9 2157.4 347.9C2174.7 349.9 2192.8 352.0 2210.1 354.0C2227.4 355.9 2244.4 357.9 2261.2 359.8C2278.0 361.7 2295.1 363.7 2310.9 365.5C2326.7 367.3 2341.8 369.0 2356.0 370.6C2370.1 372.2 2383.5 373.8 2395.8 375.2C2408.1 376.6 2419.3 377.9 2429.7 379.1C2440.1 380.3 2449.4 381.4 2458.1 382.3C2466.8 383.3 2474.6 384.2 2482.0 385.1C2489.5 386.0 2496.4 386.8 2502.8 387.5C2509.1 388.2 2515.0 388.9 2520.3 389.5C2525.6 390.1 2530.3 390.6 2534.5 391.1C2538.7 391.6 2542.2 392.0 2545.5 392.4C2548.8 392.7 2551.6 393.1 2554.1 393.4C2556.6 393.6 2558.1 393.8 2560.5 394.1C2562.8 394.4 2565.9 394.7 2568.1 395.0C2570.3 395.2 2571.7 395.4 2573.5 395.6C2575.2 395.8 2577.7 396.1 2578.5 396.2Z M2329.3 378.0 L1859.4 334.2 L1932.1 782.1Z" fill="#000" fill-opacity=".40" fill-rule="evenodd"/></g></g><path d="M1679.0 956.9 v7.5 M1679.0 956.9 h-8" stroke="#d4d4d4" stroke-width="1.9" fill="none"/><path d="M1751.1 956.9 v7.5 M1679.0 901.5 h-8" stroke="#d4d4d4" stroke-width="1.9" fill="none"/><path d="M1823.3 956.9 v7.5 M1679.0 846.2 h-8" stroke="#d4d4d4" stroke-width="1.9" fill="none"/><path d="M1895.4 956.9 v7.5 M1679.0 790.8 h-8" stroke="#d4d4d4" stroke-width="1.9" fill="none"/><path d="M1967.6 956.9 v7.5 M1679.0 735.5 h-8" stroke="#d4d4d4" stroke-width="1.9" fill="none"/><path d="M2039.7 956.9 v7.5 M1679.0 680.1 h-8" stroke="#d4d4d4" stroke-width="1.9" fill="none"/><path d="M2111.9 956.9 v7.5 M1679.0 624.8 h-8" stroke="#d4d4d4" stroke-width="1.9" fill="none"/><path d="M2184.0 956.9 v7.5 M1679.0 569.4 h-8" stroke="#d4d4d4" stroke-width="1.9" fill="none"/><path d="M2256.2 956.9 v7.5 M1679.0 514.1 h-8" stroke="#d4d4d4" stroke-width="1.9" fill="none"/><path d="M2328.3 956.9 v7.5 M1679.0 458.7 h-8" stroke="#d4d4d4" stroke-width="1.9" fill="none"/><path d="M2400.5 956.9 v7.5 M1679.0 403.4 h-8" stroke="#d4d4d4" stroke-width="1.9" fill="none"/><path d="M2472.6 956.9 v7.5 M1679.0 348.0 h-8" stroke="#d4d4d4" stroke-width="1.9" fill="none"/><rect x="1679.0" y="291.1" width="866.5" height="665.8" fill="none" stroke="#999" stroke-width="1.8"/><path d="M1671.0 956.9 H2545.5" stroke="#b0b0b0" stroke-width="2"/><rect x="1849.2" y="322.0" width="17.6" height="17.6" fill="none" stroke="#fff" stroke-width="1.9"/><rect x="1881.9" y="355.2" width="17.6" height="17.6" fill="none" stroke="#fff" stroke-width="1.9"/><rect x="1935.3" y="343.3" width="17.6" height="17.6" fill="none" stroke="#fff" stroke-width="1.9"/><rect x="1962.8" y="332.4" width="17.6" height="17.6" fill="none" stroke="#fff" stroke-width="1.9"/><rect x="1999.7" y="338.1" width="17.6" height="17.6" fill="none" stroke="#fff" stroke-width="1.9"/><rect x="2042.2" y="347.9" width="17.6" height="17.6" fill="none" stroke="#fff" stroke-width="1.9"/><rect x="2101.4" y="353.1" width="17.6" height="17.6" fill="none" stroke="#fff" stroke-width="1.9"/><rect x="2318.7" y="366.1" width="17.6" height="17.6" fill="none" stroke="#fff" stroke-width="1.9"/><rect x="1932.2" y="374.4" width="17.6" height="17.6" fill="none" stroke="#fff" stroke-width="1.9"/><rect x="2019.9" y="392.0" width="17.6" height="17.6" fill="none" stroke="#fff" stroke-width="1.9"/><rect x="2005.4" y="400.9" width="17.6" height="17.6" fill="none" stroke="#fff" stroke-width="1.9"/><rect x="2210.3" y="394.1" width="17.6" height="17.6" fill="none" stroke="#fff" stroke-width="1.9"/><rect x="2126.8" y="410.7" width="17.6" height="17.6" fill="none" stroke="#fff" stroke-width="1.9"/><rect x="1890.7" y="415.9" width="17.6" height="17.6" fill="none" stroke="#fff" stroke-width="1.9"/><rect x="1868.9" y="441.8" width="17.6" height="17.6" fill="none" stroke="#fff" stroke-width="1.9"/><rect x="1876.2" y="484.4" width="17.6" height="17.6" fill="none" stroke="#fff" stroke-width="1.9"/><rect x="1922.9" y="480.8" width="17.6" height="17.6" fill="none" stroke="#fff" stroke-width="1.9"/><rect x="1949.9" y="488.0" width="17.6" height="17.6" fill="none" stroke="#fff" stroke-width="1.9"/><rect x="2082.7" y="473.0" width="17.6" height="17.6" fill="none" stroke="#fff" stroke-width="1.9"/><rect x="1998.1" y="511.9" width="17.6" height="17.6" fill="none" stroke="#fff" stroke-width="1.9"/><rect x="1926.0" y="551.8" width="17.6" height="17.6" fill="none" stroke="#fff" stroke-width="1.9"/><rect x="2109.1" y="579.9" width="17.6" height="17.6" fill="none" stroke="#fff" stroke-width="1.9"/><rect x="1926.0" y="620.3" width="17.6" height="17.6" fill="none" stroke="#fff" stroke-width="1.9"/><rect x="1922.9" y="771.3" width="17.6" height="17.6" fill="none" stroke="#fff" stroke-width="1.9"/><rect x="1954.3" y="427.1" width="17" height="17" fill="none" stroke="#000" stroke-width="2"/><circle cx="1898.5" cy="336.5" r="5.8" fill="#00f000" stroke="#000" stroke-width="1.4"/><circle cx="1900.5" cy="364.5" r="5.8" fill="#407848" stroke="#000" stroke-width="1.4"/><circle cx="1942.6" cy="351.5" r="5.8" fill="#a0b040" stroke="#000" stroke-width="1.4"/><circle cx="1978.9" cy="342.7" r="5.8" fill="#ffff00" stroke="#000" stroke-width="1.4"/><circle cx="2008.5" cy="347.4" r="5.8" fill="#d8a820" stroke="#000" stroke-width="1.4"/><circle cx="2051.0" cy="356.7" r="5.8" fill="#d88830" stroke="#000" stroke-width="1.4"/><circle cx="2110.2" cy="362.4" r="5.8" fill="#c86830" stroke="#000" stroke-width="1.4"/><circle cx="2217.6" cy="369.2" r="5.8" fill="#ff0000" stroke="#000" stroke-width="1.4"/><circle cx="2185.4" cy="395.1" r="5.8" fill="#a83038" stroke="#000" stroke-width="1.4"/><circle cx="1940.5" cy="384.2" r="5.8" fill="#586840" stroke="#000" stroke-width="1.4"/><circle cx="2029.2" cy="402.4" r="5.8" fill="#785040" stroke="#000" stroke-width="1.4"/><circle cx="2012.6" cy="409.7" r="5.8" fill="#c89888" stroke="#000" stroke-width="1.4"/><circle cx="2132.5" cy="419.5" r="5.8" fill="#b85060" stroke="#000" stroke-width="1.4"/><circle cx="1900.0" cy="424.7" r="5.8" fill="#60b8a0" stroke="#000" stroke-width="1.4"/><circle cx="1961.8" cy="436.1" r="5.8" fill="#a8a8a8" stroke="#000" stroke-width="1.4"/><circle cx="1902.6" cy="452.2" r="5.8" fill="#00ffff" stroke="#000" stroke-width="1.4"/><circle cx="1950.4" cy="478.7" r="5.8" fill="#000000" stroke="#000" stroke-width="1.4"/><circle cx="1902.1" cy="485.4" r="5.8" fill="#108898" stroke="#000" stroke-width="1.4"/><circle cx="1927.5" cy="488.0" r="5.8" fill="#6080a8" stroke="#000" stroke-width="1.4"/><circle cx="1956.1" cy="497.9" r="5.8" fill="#8880b8" stroke="#000" stroke-width="1.4"/><circle cx="2086.3" cy="482.3" r="5.8" fill="#b85898" stroke="#000" stroke-width="1.4"/><circle cx="1983.6" cy="524.3" r="5.8" fill="#584070" stroke="#000" stroke-width="1.4"/><circle cx="2025.1" cy="546.6" r="5.8" fill="#ff00ff" stroke="#000" stroke-width="1.4"/><circle cx="1929.6" cy="559.6" r="5.8" fill="#4860a8" stroke="#000" stroke-width="1.4"/><circle cx="1931.2" cy="620.8" r="5.8" fill="#3840a0" stroke="#000" stroke-width="1.4"/><circle cx="1920.3" cy="644.2" r="5.8" fill="#0000ff" stroke="#000" stroke-width="1.4"/><defs><linearGradient id="i0" gradientUnits="userSpaceOnUse" x1="2268" x2="2536"><stop offset="0" stop-color="#9748ff"/><stop offset=".071" stop-color="#a546ff"/><stop offset=".143" stop-color="#b443ff"/><stop offset=".214" stop-color="#c341ff"/><stop offset=".286" stop-color="#d33eff"/><stop offset=".357" stop-color="#e43bff"/><stop offset=".429" stop-color="#f438ff"/><stop offset=".5" stop-color="#ff34f9"/><stop offset=".571" stop-color="#ff2ee9"/><stop offset=".643" stop-color="#ff29db"/><stop offset=".714" stop-color="#ff24ce"/><stop offset=".786" stop-color="#ff1fc2"/><stop offset=".857" stop-color="#ff1bb7"/><stop offset=".929" stop-color="#ff17ad"/><stop offset="1" stop-color="#ff14a4"/></linearGradient><linearGradient id="i1" gradientUnits="userSpaceOnUse" x1="2268" x2="2536"><stop offset="0" stop-color="#9743ff"/><stop offset=".071" stop-color="#a641ff"/><stop offset=".143" stop-color="#b43eff"/><stop offset=".214" stop-color="#c43cff"/><stop offset=".286" stop-color="#d339ff"/><stop offset=".357" stop-color="#e336ff"/><stop offset=".429" stop-color="#f434ff"/><stop offset=".5" stop-color="#ff30f9"/><stop offset=".571" stop-color="#ff2aea"/><stop offset=".643" stop-color="#ff25db"/><stop offset=".714" stop-color="#ff20cf"/><stop offset=".786" stop-color="#ff1cc3"/><stop offset=".857" stop-color="#ff18b8"/><stop offset=".929" stop-color="#ff14ae"/><stop offset="1" stop-color="#ff11a5"/></linearGradient><linearGradient id="i2" gradientUnits="userSpaceOnUse" x1="2268" x2="2536"><stop offset="0" stop-color="#983fff"/><stop offset=".071" stop-color="#a63cff"/><stop offset=".143" stop-color="#b53aff"/><stop offset=".214" stop-color="#c437ff"/><stop offset=".286" stop-color="#d334ff"/><stop offset=".357" stop-color="#e332ff"/><stop offset=".429" stop-color="#f32fff"/><stop offset=".5" stop-color="#ff2bfa"/><stop offset=".571" stop-color="#ff26ea"/><stop offset=".643" stop-color="#ff21dc"/><stop offset=".714" stop-color="#ff1ccf"/><stop offset=".786" stop-color="#ff18c4"/><stop offset=".857" stop-color="#ff14b9"/><stop offset=".929" stop-color="#ff11af"/><stop offset="1" stop-color="#ff0da6"/></linearGradient><linearGradient id="i3" gradientUnits="userSpaceOnUse" x1="2268" x2="2536"><stop offset="0" stop-color="#983bff"/><stop offset=".071" stop-color="#a738ff"/><stop offset=".143" stop-color="#b535ff"/><stop offset=".214" stop-color="#c433ff"/><stop offset=".286" stop-color="#d330ff"/><stop offset=".357" stop-color="#e32dff"/><stop offset=".429" stop-color="#f32aff"/><stop offset=".5" stop-color="#ff27fa"/><stop offset=".571" stop-color="#ff21eb"/><stop offset=".643" stop-color="#ff1ddd"/><stop offset=".714" stop-color="#ff18d0"/><stop offset=".786" stop-color="#ff14c4"/><stop offset=".857" stop-color="#ff11ba"/><stop offset=".929" stop-color="#ff0db0"/><stop offset="1" stop-color="#ff0aa7"/></linearGradient><linearGradient id="i4" gradientUnits="userSpaceOnUse" x1="2268" x2="2536"><stop offset="0" stop-color="#9936ff"/><stop offset=".071" stop-color="#a734ff"/><stop offset=".143" stop-color="#b531ff"/><stop offset=".214" stop-color="#c42eff"/><stop offset=".286" stop-color="#d32bff"/><stop offset=".357" stop-color="#e329ff"/><stop offset=".429" stop-color="#f326ff"/><stop offset=".5" stop-color="#ff22fb"/><stop offset=".571" stop-color="#ff1dec"/><stop offset=".643" stop-color="#ff19de"/><stop offset=".714" stop-color="#ff15d1"/><stop offset=".786" stop-color="#ff11c5"/><stop offset=".857" stop-color="#ff0dbb"/><stop offset=".929" stop-color="#ff0ab1"/><stop offset="1" stop-color="#ff07a8"/></linearGradient><linearGradient id="i5" gradientUnits="userSpaceOnUse" x1="2268" x2="2536"><stop offset="0" stop-color="#9a32ff"/><stop offset=".071" stop-color="#a72fff"/><stop offset=".143" stop-color="#b62dff"/><stop offset=".214" stop-color="#c42aff"/><stop offset=".286" stop-color="#d327ff"/><stop offset=".357" stop-color="#e324ff"/><stop offset=".429" stop-color="#f221ff"/><stop offset=".5" stop-color="#ff1efb"/><stop offset=".571" stop-color="#ff19ec"/><stop offset=".643" stop-color="#ff15de"/><stop offset=".714" stop-color="#ff11d2"/><stop offset=".786" stop-color="#ff0dc6"/><stop offset=".857" stop-color="#ff0abc"/><stop offset=".929" stop-color="#ff07b2"/><stop offset="1" stop-color="#ff04a9"/></linearGradient><linearGradient id="i6" gradientUnits="userSpaceOnUse" x1="2268" x2="2536"><stop offset="0" stop-color="#9a2eff"/><stop offset=".071" stop-color="#a82bff"/><stop offset=".143" stop-color="#b628ff"/><stop offset=".214" stop-color="#c426ff"/><stop offset=".286" stop-color="#d323ff"/><stop offset=".357" stop-color="#e220ff"/><stop offset=".429" stop-color="#f21dff"/><stop offset=".5" stop-color="#ff1afc"/><stop offset=".571" stop-color="#ff15ed"/><stop offset=".643" stop-color="#ff11df"/><stop offset=".714" stop-color="#ff0dd3"/><stop offset=".786" stop-color="#ff0ac7"/><stop offset=".857" stop-color="#ff07bc"/><stop offset=".929" stop-color="#ff04b3"/><stop offset="1" stop-color="#ff01a9"/></linearGradient><linearGradient id="i7" gradientUnits="userSpaceOnUse" x1="2268" x2="2536"><stop offset="0" stop-color="#9b2aff"/><stop offset=".071" stop-color="#a827ff"/><stop offset=".143" stop-color="#b624ff"/><stop offset=".214" stop-color="#c522ff"/><stop offset=".286" stop-color="#d31fff"/><stop offset=".357" stop-color="#e21cff"/><stop offset=".429" stop-color="#f219ff"/><stop offset=".5" stop-color="#ff15fc"/><stop offset=".571" stop-color="#ff11ed"/><stop offset=".643" stop-color="#ff0de0"/><stop offset=".714" stop-color="#ff0ad3"/><stop offset=".786" stop-color="#ff07c8"/><stop offset=".857" stop-color="#ff04bd"/><stop offset=".929" stop-color="#ff01b3"/><stop offset="1" stop-color="#ff00aa"/></linearGradient><linearGradient id="i8" gradientUnits="userSpaceOnUse" x1="2268" x2="2536"><stop offset="0" stop-color="#9b26ff"/><stop offset=".071" stop-color="#a923ff"/><stop offset=".143" stop-color="#b620ff"/><stop offset=".214" stop-color="#c51dff"/><stop offset=".286" stop-color="#d31bff"/><stop offset=".357" stop-color="#e218ff"/><stop offset=".429" stop-color="#f115ff"/><stop offset=".5" stop-color="#ff11fd"/><stop offset=".571" stop-color="#ff0dee"/><stop offset=".643" stop-color="#ff0ae0"/><stop offset=".714" stop-color="#ff06d4"/><stop offset=".786" stop-color="#ff03c9"/><stop offset=".857" stop-color="#ff00be"/><stop offset=".929" stop-color="#ff00b4"/><stop offset="1" stop-color="#ff00ab"/></linearGradient><linearGradient id="i9" gradientUnits="userSpaceOnUse" x1="2268" x2="2536"><stop offset="0" stop-color="#9c22ff"/><stop offset=".071" stop-color="#a91fff"/><stop offset=".143" stop-color="#b71cff"/><stop offset=".214" stop-color="#c519ff"/><stop offset=".286" stop-color="#d317ff"/><stop offset=".357" stop-color="#e214ff"/><stop offset=".429" stop-color="#f111ff"/><stop offset=".5" stop-color="#ff0dfd"/><stop offset=".571" stop-color="#ff0aef"/><stop offset=".643" stop-color="#ff06e1"/><stop offset=".714" stop-color="#ff03d5"/><stop offset=".786" stop-color="#ff00c9"/><stop offset=".857" stop-color="#ff00bf"/><stop offset=".929" stop-color="#ff00b5"/><stop offset="1" stop-color="#ff00ac"/></linearGradient><linearGradient id="i10" gradientUnits="userSpaceOnUse" x1="2268" x2="2536"><stop offset="0" stop-color="#9c1eff"/><stop offset=".071" stop-color="#a91bff"/><stop offset=".143" stop-color="#b718ff"/><stop offset=".214" stop-color="#c516ff"/><stop offset=".286" stop-color="#d313ff"/><stop offset=".357" stop-color="#e210ff"/><stop offset=".429" stop-color="#f10dff"/><stop offset=".5" stop-color="#ff09fe"/><stop offset=".571" stop-color="#ff06ef"/><stop offset=".643" stop-color="#ff03e2"/><stop offset=".714" stop-color="#ff00d5"/><stop offset=".786" stop-color="#ff00ca"/><stop offset=".857" stop-color="#ff00c0"/><stop offset=".929" stop-color="#ff00b6"/><stop offset="1" stop-color="#ff00ad"/></linearGradient><linearGradient id="i11" gradientUnits="userSpaceOnUse" x1="2268" x2="2536"><stop offset="0" stop-color="#9d1aff"/><stop offset=".071" stop-color="#aa17ff"/><stop offset=".143" stop-color="#b715ff"/><stop offset=".214" stop-color="#c512ff"/><stop offset=".286" stop-color="#d30fff"/><stop offset=".357" stop-color="#e20cff"/><stop offset=".429" stop-color="#f009ff"/><stop offset=".5" stop-color="#ff06fe"/><stop offset=".571" stop-color="#ff02f0"/><stop offset=".643" stop-color="#ff00e2"/><stop offset=".714" stop-color="#ff00d6"/><stop offset=".786" stop-color="#ff00cb"/><stop offset=".857" stop-color="#ff00c0"/><stop offset=".929" stop-color="#ff00b7"/><stop offset="1" stop-color="#ff00ae"/></linearGradient><linearGradient id="i12" gradientUnits="userSpaceOnUse" x1="2268" x2="2536"><stop offset="0" stop-color="#9d16ff"/><stop offset=".071" stop-color="#aa14ff"/><stop offset=".143" stop-color="#b811ff"/><stop offset=".214" stop-color="#c50eff"/><stop offset=".286" stop-color="#d30bff"/><stop offset=".357" stop-color="#e108ff"/><stop offset=".429" stop-color="#f005ff"/><stop offset=".5" stop-color="#ff02ff"/><stop offset=".571" stop-color="#ff00f0"/><stop offset=".643" stop-color="#ff00e3"/><stop offset=".714" stop-color="#ff00d7"/><stop offset=".786" stop-color="#ff00cc"/><stop offset=".857" stop-color="#ff00c1"/><stop offset=".929" stop-color="#ff00b8"/><stop offset="1" stop-color="#ff00af"/></linearGradient><linearGradient id="i13" gradientUnits="userSpaceOnUse" x1="2268" x2="2536"><stop offset="0" stop-color="#9e13ff"/><stop offset=".071" stop-color="#ab10ff"/><stop offset=".143" stop-color="#b80dff"/><stop offset=".214" stop-color="#c50aff"/><stop offset=".286" stop-color="#d307ff"/><stop offset=".357" stop-color="#e104ff"/><stop offset=".429" stop-color="#f001ff"/><stop offset=".5" stop-color="#ff00ff"/><stop offset=".571" stop-color="#ff00f1"/><stop offset=".643" stop-color="#ff00e4"/><stop offset=".714" stop-color="#ff00d8"/><stop offset=".786" stop-color="#ff00cc"/><stop offset=".857" stop-color="#ff00c2"/><stop offset=".929" stop-color="#ff00b9"/><stop offset="1" stop-color="#ff00b0"/></linearGradient><linearGradient id="i14" gradientUnits="userSpaceOnUse" x1="2268" x2="2536"><stop offset="0" stop-color="#9e0fff"/><stop offset=".071" stop-color="#ab0cff"/><stop offset=".143" stop-color="#b80aff"/><stop offset=".214" stop-color="#c507ff"/><stop offset=".286" stop-color="#d304ff"/><stop offset=".357" stop-color="#e101ff"/><stop offset=".429" stop-color="#f000ff"/><stop offset=".5" stop-color="#fe00ff"/><stop offset=".571" stop-color="#ff00f1"/><stop offset=".643" stop-color="#ff00e4"/><stop offset=".714" stop-color="#ff00d8"/><stop offset=".786" stop-color="#ff00cd"/><stop offset=".857" stop-color="#ff00c3"/><stop offset=".929" stop-color="#ff00b9"/><stop offset="1" stop-color="#ff00b0"/></linearGradient><linearGradient id="i15" gradientUnits="userSpaceOnUse" x1="2268" x2="2536"><stop offset="0" stop-color="#9f0cff"/><stop offset=".071" stop-color="#ab09ff"/><stop offset=".143" stop-color="#b806ff"/><stop offset=".214" stop-color="#c603ff"/><stop offset=".286" stop-color="#d300ff"/><stop offset=".357" stop-color="#e100ff"/><stop offset=".429" stop-color="#ef00ff"/><stop offset=".5" stop-color="#fe00ff"/><stop offset=".571" stop-color="#ff00f2"/><stop offset=".643" stop-color="#ff00e5"/><stop offset=".714" stop-color="#ff00d9"/><stop offset=".786" stop-color="#ff00ce"/><stop offset=".857" stop-color="#ff00c4"/><stop offset=".929" stop-color="#ff00ba"/><stop offset="1" stop-color="#ff00b1"/></linearGradient><linearGradient id="i16" gradientUnits="userSpaceOnUse" x1="2268" x2="2536"><stop offset="0" stop-color="#9f08ff"/><stop offset=".071" stop-color="#ac05ff"/><stop offset=".143" stop-color="#b903ff"/><stop offset=".214" stop-color="#c600ff"/><stop offset=".286" stop-color="#d300ff"/><stop offset=".357" stop-color="#e100ff"/><stop offset=".429" stop-color="#ef00ff"/><stop offset=".5" stop-color="#fd00ff"/><stop offset=".571" stop-color="#ff00f2"/><stop offset=".643" stop-color="#ff00e5"/><stop offset=".714" stop-color="#ff00da"/><stop offset=".786" stop-color="#ff00cf"/><stop offset=".857" stop-color="#ff00c4"/><stop offset=".929" stop-color="#ff00bb"/><stop offset="1" stop-color="#ff00b2"/></linearGradient><linearGradient id="i17" gradientUnits="userSpaceOnUse" x1="2268" x2="2536"><stop offset="0" stop-color="#a005ff"/><stop offset=".071" stop-color="#ac02ff"/><stop offset=".143" stop-color="#b900ff"/><stop offset=".214" stop-color="#c600ff"/><stop offset=".286" stop-color="#d300ff"/><stop offset=".357" stop-color="#e100ff"/><stop offset=".429" stop-color="#ef00ff"/><stop offset=".5" stop-color="#fd00ff"/><stop offset=".571" stop-color="#ff00f3"/><stop offset=".643" stop-color="#ff00e6"/><stop offset=".714" stop-color="#ff00da"/><stop offset=".786" stop-color="#ff00cf"/><stop offset=".857" stop-color="#ff00c5"/><stop offset=".929" stop-color="#ff00bc"/><stop offset="1" stop-color="#ff00b3"/></linearGradient><linearGradient id="i18" gradientUnits="userSpaceOnUse" x1="2268" x2="2536"><stop offset="0" stop-color="#a002ff"/><stop offset=".071" stop-color="#ac00ff"/><stop offset=".143" stop-color="#b900ff"/><stop offset=".214" stop-color="#c600ff"/><stop offset=".286" stop-color="#d300ff"/><stop offset=".357" stop-color="#e100ff"/><stop offset=".429" stop-color="#ee00ff"/><stop offset=".5" stop-color="#fd00ff"/><stop offset=".571" stop-color="#ff00f3"/><stop offset=".643" stop-color="#ff00e7"/><stop offset=".714" stop-color="#ff00db"/><stop offset=".786" stop-color="#ff00d0"/><stop offset=".857" stop-color="#ff00c6"/><stop offset=".929" stop-color="#ff00bc"/><stop offset="1" stop-color="#ff00b4"/></linearGradient><linearGradient id="i19" gradientUnits="userSpaceOnUse" x1="2268" x2="2536"><stop offset="0" stop-color="#a000ff"/><stop offset=".071" stop-color="#ad00ff"/><stop offset=".143" stop-color="#b900ff"/><stop offset=".214" stop-color="#c600ff"/><stop offset=".286" stop-color="#d300ff"/><stop offset=".357" stop-color="#e000ff"/><stop offset=".429" stop-color="#ee00ff"/><stop offset=".5" stop-color="#fc00ff"/><stop offset=".571" stop-color="#ff00f4"/><stop offset=".643" stop-color="#ff00e7"/><stop offset=".714" stop-color="#ff00db"/><stop offset=".786" stop-color="#ff00d1"/><stop offset=".857" stop-color="#ff00c7"/><stop offset=".929" stop-color="#ff00bd"/><stop offset="1" stop-color="#ff00b4"/></linearGradient><linearGradient id="i20" gradientUnits="userSpaceOnUse" x1="2268" x2="2536"><stop offset="0" stop-color="#a100ff"/><stop offset=".071" stop-color="#ad00ff"/><stop offset=".143" stop-color="#b900ff"/><stop offset=".214" stop-color="#c600ff"/><stop offset=".286" stop-color="#d300ff"/><stop offset=".357" stop-color="#e000ff"/><stop offset=".429" stop-color="#ee00ff"/><stop offset=".5" stop-color="#fc00ff"/><stop offset=".571" stop-color="#ff00f4"/><stop offset=".643" stop-color="#ff00e8"/><stop offset=".714" stop-color="#ff00dc"/><stop offset=".786" stop-color="#ff00d1"/><stop offset=".857" stop-color="#ff00c7"/><stop offset=".929" stop-color="#ff00be"/><stop offset="1" stop-color="#ff00b5"/></linearGradient><linearGradient id="i21" gradientUnits="userSpaceOnUse" x1="2268" x2="2536"><stop offset="0" stop-color="#a100ff"/><stop offset=".071" stop-color="#ad00ff"/><stop offset=".143" stop-color="#ba00ff"/><stop offset=".214" stop-color="#c600ff"/><stop offset=".286" stop-color="#d300ff"/><stop offset=".357" stop-color="#e000ff"/><stop offset=".429" stop-color="#ee00ff"/><stop offset=".5" stop-color="#fb00ff"/><stop offset=".571" stop-color="#ff00f5"/><stop offset=".643" stop-color="#ff00e8"/><stop offset=".714" stop-color="#ff00dd"/><stop offset=".786" stop-color="#ff00d2"/><stop offset=".857" stop-color="#ff00c8"/><stop offset=".929" stop-color="#ff00bf"/><stop offset="1" stop-color="#ff00b6"/></linearGradient><linearGradient id="i22" gradientUnits="userSpaceOnUse" x1="2268" x2="2536"><stop offset="0" stop-color="#a200ff"/><stop offset=".071" stop-color="#ae00ff"/><stop offset=".143" stop-color="#ba00ff"/><stop offset=".214" stop-color="#c600ff"/><stop offset=".286" stop-color="#d300ff"/><stop offset=".357" stop-color="#e000ff"/><stop offset=".429" stop-color="#ed00ff"/><stop offset=".5" stop-color="#fb00ff"/><stop offset=".571" stop-color="#ff00f5"/><stop offset=".643" stop-color="#ff00e9"/><stop offset=".714" stop-color="#ff00dd"/><stop offset=".786" stop-color="#ff00d3"/><stop offset=".857" stop-color="#ff00c9"/><stop offset=".929" stop-color="#ff00bf"/><stop offset="1" stop-color="#ff00b7"/></linearGradient><linearGradient id="i23" gradientUnits="userSpaceOnUse" x1="2268" x2="2536"><stop offset="0" stop-color="#a200ff"/><stop offset=".071" stop-color="#ae00ff"/><stop offset=".143" stop-color="#ba00ff"/><stop offset=".214" stop-color="#c600ff"/><stop offset=".286" stop-color="#d300ff"/><stop offset=".357" stop-color="#e000ff"/><stop offset=".429" stop-color="#ed00ff"/><stop offset=".5" stop-color="#fb00ff"/><stop offset=".571" stop-color="#ff00f6"/><stop offset=".643" stop-color="#ff00e9"/><stop offset=".714" stop-color="#ff00de"/><stop offset=".786" stop-color="#ff00d3"/><stop offset=".857" stop-color="#ff00c9"/><stop offset=".929" stop-color="#ff00c0"/><stop offset="1" stop-color="#ff00b8"/></linearGradient><linearGradient id="i24" gradientUnits="userSpaceOnUse" x1="2268" x2="2536"><stop offset="0" stop-color="#a300ff"/><stop offset=".071" stop-color="#ae00ff"/><stop offset=".143" stop-color="#ba00ff"/><stop offset=".214" stop-color="#c700ff"/><stop offset=".286" stop-color="#d300ff"/><stop offset=".357" stop-color="#e000ff"/><stop offset=".429" stop-color="#ed00ff"/><stop offset=".5" stop-color="#fa00ff"/><stop offset=".571" stop-color="#ff00f6"/><stop offset=".643" stop-color="#ff00ea"/><stop offset=".714" stop-color="#ff00df"/><stop offset=".786" stop-color="#ff00d4"/><stop offset=".857" stop-color="#ff00ca"/><stop offset=".929" stop-color="#ff00c1"/><stop offset="1" stop-color="#ff00b8"/></linearGradient><linearGradient id="i25" gradientUnits="userSpaceOnUse" x1="2268" x2="2536"><stop offset="0" stop-color="#a300ff"/><stop offset=".071" stop-color="#af00ff"/><stop offset=".143" stop-color="#ba00ff"/><stop offset=".214" stop-color="#c700ff"/><stop offset=".286" stop-color="#d300ff"/><stop offset=".357" stop-color="#e000ff"/><stop offset=".429" stop-color="#ed00ff"/><stop offset=".5" stop-color="#fa00ff"/><stop offset=".571" stop-color="#ff00f7"/><stop offset=".643" stop-color="#ff00ea"/><stop offset=".714" stop-color="#ff00df"/><stop offset=".786" stop-color="#ff00d4"/><stop offset=".857" stop-color="#ff00cb"/><stop offset=".929" stop-color="#ff00c1"/><stop offset="1" stop-color="#ff00b9"/></linearGradient><clipPath id="inc"><rect x="2268.5" y="724.0" width="267.5" height="175.0"/></clipPath></defs><rect x="2264.5" y="720.0" width="275.5" height="183.0" fill="#303030"/><g clip-path="url(#inc)"><g filter="url(#vb)"><rect x="2268.5" y="707.7" width="267.5" height="8.6" fill="url(#i0)"/><rect x="2268.5" y="715.7" width="267.5" height="8.6" fill="url(#i1)"/><rect x="2268.5" y="723.7" width="267.5" height="8.6" fill="url(#i2)"/><rect x="2268.5" y="731.7" width="267.5" height="8.6" fill="url(#i3)"/><rect x="2268.5" y="739.7" width="267.5" height="8.6" fill="url(#i4)"/><rect x="2268.5" y="747.7" width="267.5" height="8.6" fill="url(#i5)"/><rect x="2268.5" y="755.7" width="267.5" height="8.6" fill="url(#i6)"/><rect x="2268.5" y="763.7" width="267.5" height="8.6" fill="url(#i7)"/><rect x="2268.5" y="771.7" width="267.5" height="8.6" fill="url(#i8)"/><rect x="2268.5" y="779.7" width="267.5" height="8.6" fill="url(#i9)"/><rect x="2268.5" y="787.7" width="267.5" height="8.6" fill="url(#i10)"/><rect x="2268.5" y="795.7" width="267.5" height="8.6" fill="url(#i11)"/><rect x="2268.5" y="803.7" width="267.5" height="8.6" fill="url(#i12)"/><rect x="2268.5" y="811.7" width="267.5" height="8.6" fill="url(#i13)"/><rect x="2268.5" y="819.7" width="267.5" height="8.6" fill="url(#i14)"/><rect x="2268.5" y="827.7" width="267.5" height="8.6" fill="url(#i15)"/><rect x="2268.5" y="835.7" width="267.5" height="8.6" fill="url(#i16)"/><rect x="2268.5" y="843.7" width="267.5" height="8.6" fill="url(#i17)"/><rect x="2268.5" y="851.7" width="267.5" height="8.6" fill="url(#i18)"/><rect x="2268.5" y="859.7" width="267.5" height="8.6" fill="url(#i19)"/><rect x="2268.5" y="867.7" width="267.5" height="8.6" fill="url(#i20)"/><rect x="2268.5" y="875.7" width="267.5" height="8.6" fill="url(#i21)"/><rect x="2268.5" y="883.7" width="267.5" height="8.6" fill="url(#i22)"/><rect x="2268.5" y="891.7" width="267.5" height="8.6" fill="url(#i23)"/><rect x="2268.5" y="899.7" width="267.5" height="8.6" fill="url(#i24)"/><rect x="2268.5" y="907.7" width="267.5" height="7.6" fill="url(#i25)"/></g><path d="M2268.5 858.4 L2536.0 764.0 V899.0 H2268.5Z" fill="#000" fill-opacity=".40"/></g><rect x="2268.5" y="724.0" width="267.5" height="175.0" fill="none" stroke="#8c8c8c" stroke-width="2"/><rect x="2392.2" y="802.2" width="17" height="17" fill="none" stroke="#fff" stroke-width="1.8"/><circle cx="2432.4" cy="831.0" r="5.2" fill="#f8f000" stroke="#000" stroke-width="1.4"/></svg>
<div class="a" style="left:2199.0px;top:913.0px;width:342.0px;height:37.0px;background:#2d2d2d;"></div>
<span class="t" style="left:2200.0px;top:918.7px;font-size:27.50px;color:#fff;transform:scaleX(0.973);">RGB Triplet: 255, 255, 0</span>
<span class="t" style="left:1673.0px;top:969.5px;font-size:19.50px;color:#ccc;transform:scaleX(1.020);">0</span>
<span class="t" style="left:1658.9px;top:950.4px;font-size:19.50px;color:#ccc;transform:scaleX(1.020);">0</span>
<span class="t" style="left:1731.3px;top:969.5px;font-size:19.50px;color:#ccc;transform:scaleX(1.020);">0.05</span>
<span class="t" style="left:1631.3px;top:892.3px;font-size:19.50px;color:#ccc;transform:scaleX(1.020);">0.05</span>
<span class="t" style="left:1809.0px;top:969.5px;font-size:19.50px;color:#ccc;transform:scaleX(1.020);">0.1</span>
<span class="t" style="left:1642.4px;top:837.0px;font-size:19.50px;color:#ccc;transform:scaleX(1.020);">0.1</span>
<span class="t" style="left:1875.6px;top:969.5px;font-size:19.50px;color:#ccc;transform:scaleX(1.020);">0.15</span>
<span class="t" style="left:1631.3px;top:781.6px;font-size:19.50px;color:#ccc;transform:scaleX(1.020);">0.15</span>
<span class="t" style="left:1953.3px;top:969.5px;font-size:19.50px;color:#ccc;transform:scaleX(1.020);">0.2</span>
<span class="t" style="left:1642.4px;top:726.3px;font-size:19.50px;color:#ccc;transform:scaleX(1.020);">0.2</span>
<span class="t" style="left:2019.9px;top:969.5px;font-size:19.50px;color:#ccc;transform:scaleX(1.020);">0.25</span>
<span class="t" style="left:1631.3px;top:670.9px;font-size:19.50px;color:#ccc;transform:scaleX(1.020);">0.25</span>
<span class="t" style="left:2097.6px;top:969.5px;font-size:19.50px;color:#ccc;transform:scaleX(1.020);">0.3</span>
<span class="t" style="left:1642.4px;top:615.6px;font-size:19.50px;color:#ccc;transform:scaleX(1.020);">0.3</span>
<span class="t" style="left:2164.2px;top:969.5px;font-size:19.50px;color:#ccc;transform:scaleX(1.020);">0.35</span>
<span class="t" style="left:1631.3px;top:560.2px;font-size:19.50px;color:#ccc;transform:scaleX(1.020);">0.35</span>
<span class="t" style="left:2241.9px;top:969.5px;font-size:19.50px;color:#ccc;transform:scaleX(1.020);">0.4</span>
<span class="t" style="left:1642.4px;top:504.9px;font-size:19.50px;color:#ccc;transform:scaleX(1.020);">0.4</span>
<span class="t" style="left:2308.5px;top:969.5px;font-size:19.50px;color:#ccc;transform:scaleX(1.020);">0.45</span>
<span class="t" style="left:1631.3px;top:449.5px;font-size:19.50px;color:#ccc;transform:scaleX(1.020);">0.45</span>
<span class="t" style="left:2386.2px;top:969.5px;font-size:19.50px;color:#ccc;transform:scaleX(1.020);">0.5</span>
<span class="t" style="left:1642.4px;top:394.2px;font-size:19.50px;color:#ccc;transform:scaleX(1.020);">0.5</span>
<span class="t" style="left:2452.8px;top:969.5px;font-size:19.50px;color:#ccc;transform:scaleX(1.020);">0.55</span>
<span class="t" style="left:1631.3px;top:338.8px;font-size:19.50px;color:#ccc;transform:scaleX(1.020);">0.55</span>
<span class="t" style="left:369.2px;top:1015.3px;font-size:38.50px;color:#f0f0f0;transform:scaleX(1.033);">Avg dE2000: 3.04</span>
<span class="t" style="left:352.3px;top:1069.7px;font-size:38.50px;color:#f0f0f0;transform:scaleX(1.051);">Max dE2000: 20.66</span>
<span class="t" style="left:320.0px;top:1136.1px;font-size:38.00px;color:#f0f0f0;transform:scaleX(1.067);">Current Reading</span>
<span class="t" style="left:320.0px;top:1186.4px;font-size:35.00px;color:#f0f0f0;transform:scaleX(0.964);">x: 0.4253</span>
<span class="t" style="left:532.4px;top:1186.4px;font-size:35.00px;color:#f0f0f0;transform:scaleX(0.969);">y: 0.4997</span>
<span class="t" style="left:320.0px;top:1241.2px;font-size:35.00px;color:#f0f0f0;transform:scaleX(0.960);">fL: 83.55</span>
<span class="t" style="left:320.0px;top:1286.6px;font-size:35.00px;color:#f0f0f0;transform:scaleX(1.009);">cd/m²: 286.25</span>
<div class="a" style="left:735.0px;top:1024.0px;width:1822.0px;height:308.0px;background:#111;border-left:2px solid #0c0c0c;border-top:2px solid #0c0c0c;"></div>
<div class="a" style="left:737.0px;top:1026.0px;width:1822.0px;height:33.0px;background:linear-gradient(#383838 0%,#2f2f2f 48%,#1b1b1b 52%,#101010 100%);"></div>
<div class="a" style="left:737.0px;top:1058.7px;width:1822.0px;height:31.9px;background:#404040;"></div>
<div class="a" style="left:737.0px;top:1090.2px;width:1822.0px;height:31.9px;background:#808080;"></div>
<div class="a" style="left:737.0px;top:1121.8px;width:1822.0px;height:31.9px;background:#404040;"></div>
<div class="a" style="left:737.0px;top:1153.4px;width:1822.0px;height:31.9px;background:#808080;"></div>
<div class="a" style="left:737.0px;top:1184.9px;width:1822.0px;height:31.9px;background:#404040;"></div>
<div class="a" style="left:737.0px;top:1216.5px;width:1822.0px;height:31.9px;background:#808080;"></div>
<div class="a" style="left:737.0px;top:1248.0px;width:1822.0px;height:31.9px;background:#404040;"></div>
<div class="a" style="left:737.0px;top:1279.5px;width:1822.0px;height:31.9px;background:#808080;"></div>
<div class="a" style="left:735.0px;top:1024.0px;width:1822.0px;height:308.0px;overflow:hidden;"><span class="t" style="left:21.5px;top:43.3px;font-size:18.00px;color:#fff;font-weight:bold;transform:scaleX(1.361);">x: CIE31</span><span class="t" style="left:226.2px;top:43.3px;font-size:18.00px;color:#fff;transform:scaleX(1.385);">0.31</span><span class="t" style="left:316.9px;top:43.3px;font-size:18.00px;color:#fff;transform:scaleX(1.385);">0.31</span><span class="t" style="left:412.3px;top:43.3px;font-size:18.00px;color:#fff;transform:scaleX(1.385);">0.31</span><span class="t" style="left:508.5px;top:43.3px;font-size:18.00px;color:#fff;transform:scaleX(1.385);">0.31</span><span class="t" style="left:604.3px;top:43.3px;font-size:18.00px;color:#fff;transform:scaleX(1.385);">0.31</span><span class="t" style="left:700.0px;top:43.3px;font-size:18.00px;color:#fff;transform:scaleX(1.385);">0.27</span><span class="t" style="left:776.4px;top:43.3px;font-size:18.00px;color:#fff;transform:scaleX(1.385);">0.40</span><span class="t" style="left:889.0px;top:43.3px;font-size:18.00px;color:#fff;transform:scaleX(1.385);">0.38</span><span class="t" style="left:1006.7px;top:43.3px;font-size:18.00px;color:#fff;transform:scaleX(1.385);">0.25</span><span class="t" style="left:1109.2px;top:43.3px;font-size:18.00px;color:#fff;transform:scaleX(1.385);">0.34</span><span class="t" style="left:1199.1px;top:43.3px;font-size:18.00px;color:#fff;transform:scaleX(1.385);">0.26</span><span class="t" style="left:1339.7px;top:43.3px;font-size:18.00px;color:#fff;transform:scaleX(1.385);">0.26</span><span class="t" style="left:1489.5px;top:43.3px;font-size:18.00px;color:#fff;transform:scaleX(1.385);">0.51</span><span class="t" style="left:1580.9px;top:43.3px;font-size:18.00px;color:#fff;transform:scaleX(1.385);">0.21</span><span class="t" style="left:1735.6px;top:43.3px;font-size:18.00px;color:#fff;transform:scaleX(1.385);">0.46</span><span class="t" style="left:21.5px;top:74.8px;font-size:18.00px;color:#fff;font-weight:bold;transform:scaleX(1.361);">y: CIE31</span><span class="t" style="left:226.2px;top:74.8px;font-size:18.00px;color:#fff;transform:scaleX(1.385);">0.33</span><span class="t" style="left:316.9px;top:74.8px;font-size:18.00px;color:#fff;transform:scaleX(1.385);">0.33</span><span class="t" style="left:412.3px;top:74.8px;font-size:18.00px;color:#fff;transform:scaleX(1.385);">0.33</span><span class="t" style="left:508.5px;top:74.8px;font-size:18.00px;color:#fff;transform:scaleX(1.385);">0.33</span><span class="t" style="left:604.3px;top:74.8px;font-size:18.00px;color:#fff;transform:scaleX(1.385);">0.33</span><span class="t" style="left:700.0px;top:74.8px;font-size:18.00px;color:#fff;transform:scaleX(1.385);">0.28</span><span class="t" style="left:776.4px;top:74.8px;font-size:18.00px;color:#fff;transform:scaleX(1.385);">0.36</span><span class="t" style="left:889.0px;top:74.8px;font-size:18.00px;color:#fff;transform:scaleX(1.385);">0.36</span><span class="t" style="left:1006.7px;top:74.8px;font-size:18.00px;color:#fff;transform:scaleX(1.385);">0.27</span><span class="t" style="left:1109.2px;top:74.8px;font-size:18.00px;color:#fff;transform:scaleX(1.385);">0.42</span><span class="t" style="left:1199.1px;top:74.8px;font-size:18.00px;color:#fff;transform:scaleX(1.385);">0.25</span><span class="t" style="left:1339.7px;top:74.8px;font-size:18.00px;color:#fff;transform:scaleX(1.385);">0.36</span><span class="t" style="left:1489.5px;top:74.8px;font-size:18.00px;color:#fff;transform:scaleX(1.385);">0.41</span><span class="t" style="left:1580.9px;top:74.8px;font-size:18.00px;color:#fff;transform:scaleX(1.385);">0.19</span><span class="t" style="left:1735.6px;top:74.8px;font-size:18.00px;color:#fff;transform:scaleX(1.385);">0.31</span><span class="t" style="left:21.5px;top:106.4px;font-size:18.00px;color:#fff;font-weight:bold;transform:scaleX(1.274);">Y</span><span class="t" style="left:226.2px;top:106.4px;font-size:18.00px;color:#fff;transform:scaleX(1.385);">351.48</span><span class="t" style="left:316.9px;top:106.4px;font-size:18.00px;color:#fff;transform:scaleX(1.385);">278.13</span><span class="t" style="left:412.3px;top:106.4px;font-size:18.00px;color:#fff;transform:scaleX(1.385);">225.32</span><span class="t" style="left:508.5px;top:106.4px;font-size:18.00px;color:#fff;transform:scaleX(1.385);">173.86</span><span class="t" style="left:604.3px;top:106.4px;font-size:18.00px;color:#fff;transform:scaleX(1.385);">120.67</span><span class="t" style="left:700.0px;top:106.4px;font-size:18.00px;color:#fff;transform:scaleX(1.385);">0.44</span><span class="t" style="left:776.4px;top:106.4px;font-size:18.00px;color:#fff;transform:scaleX(1.385);">34.83</span><span class="t" style="left:889.0px;top:106.4px;font-size:18.00px;color:#fff;transform:scaleX(1.385);">122.03</span><span class="t" style="left:1006.7px;top:106.4px;font-size:18.00px;color:#fff;transform:scaleX(1.385);">65.73</span><span class="t" style="left:1109.2px;top:106.4px;font-size:18.00px;color:#fff;transform:scaleX(1.385);">44.82</span><span class="t" style="left:1199.1px;top:106.4px;font-size:18.00px;color:#fff;transform:scaleX(1.385);">82.40</span><span class="t" style="left:1339.7px;top:106.4px;font-size:18.00px;color:#fff;transform:scaleX(1.385);">148.27</span><span class="t" style="left:1489.5px;top:106.4px;font-size:18.00px;color:#fff;transform:scaleX(1.385);">98.71</span><span class="t" style="left:1580.9px;top:106.4px;font-size:18.00px;color:#fff;transform:scaleX(1.385);">42.78</span><span class="t" style="left:1735.6px;top:106.4px;font-size:18.00px;color:#fff;transform:scaleX(1.385);">65.24</span><span class="t" style="left:21.5px;top:137.9px;font-size:18.00px;color:#fff;font-weight:bold;transform:scaleX(1.412);">Target x:CIE31</span><span class="t" style="left:226.2px;top:137.9px;font-size:18.00px;color:#fff;transform:scaleX(1.385);">0.31</span><span class="t" style="left:316.9px;top:137.9px;font-size:18.00px;color:#fff;transform:scaleX(1.385);">0.31</span><span class="t" style="left:412.3px;top:137.9px;font-size:18.00px;color:#fff;transform:scaleX(1.385);">0.31</span><span class="t" style="left:508.5px;top:137.9px;font-size:18.00px;color:#fff;transform:scaleX(1.385);">0.31</span><span class="t" style="left:604.3px;top:137.9px;font-size:18.00px;color:#fff;transform:scaleX(1.385);">0.31</span><span class="t" style="left:700.0px;top:137.9px;font-size:18.00px;color:#fff;transform:scaleX(1.385);">0.31</span><span class="t" style="left:776.4px;top:137.9px;font-size:18.00px;color:#fff;transform:scaleX(1.385);">0.40</span><span class="t" style="left:889.0px;top:137.9px;font-size:18.00px;color:#fff;transform:scaleX(1.385);">0.38</span><span class="t" style="left:1006.7px;top:137.9px;font-size:18.00px;color:#fff;transform:scaleX(1.385);">0.25</span><span class="t" style="left:1109.2px;top:137.9px;font-size:18.00px;color:#fff;transform:scaleX(1.385);">0.34</span><span class="t" style="left:1199.1px;top:137.9px;font-size:18.00px;color:#fff;transform:scaleX(1.385);">0.27</span><span class="t" style="left:1339.7px;top:137.9px;font-size:18.00px;color:#fff;transform:scaleX(1.385);">0.26</span><span class="t" style="left:1489.5px;top:137.9px;font-size:18.00px;color:#fff;transform:scaleX(1.385);">0.51</span><span class="t" style="left:1580.9px;top:137.9px;font-size:18.00px;color:#fff;transform:scaleX(1.385);">0.22</span><span class="t" style="left:1735.6px;top:137.9px;font-size:18.00px;color:#fff;transform:scaleX(1.385);">0.46</span><span class="t" style="left:21.5px;top:169.5px;font-size:18.00px;color:#fff;font-weight:bold;transform:scaleX(1.403);">Target y:CIE31</span><span class="t" style="left:226.2px;top:169.5px;font-size:18.00px;color:#fff;transform:scaleX(1.385);">0.33</span><span class="t" style="left:316.9px;top:169.5px;font-size:18.00px;color:#fff;transform:scaleX(1.385);">0.33</span><span class="t" style="left:412.3px;top:169.5px;font-size:18.00px;color:#fff;transform:scaleX(1.385);">0.33</span><span class="t" style="left:508.5px;top:169.5px;font-size:18.00px;color:#fff;transform:scaleX(1.385);">0.33</span><span class="t" style="left:604.3px;top:169.5px;font-size:18.00px;color:#fff;transform:scaleX(1.385);">0.33</span><span class="t" style="left:700.0px;top:169.5px;font-size:18.00px;color:#fff;transform:scaleX(1.385);">0.33</span><span class="t" style="left:776.4px;top:169.5px;font-size:18.00px;color:#fff;transform:scaleX(1.385);">0.36</span><span class="t" style="left:889.0px;top:169.5px;font-size:18.00px;color:#fff;transform:scaleX(1.385);">0.36</span><span class="t" style="left:1006.7px;top:169.5px;font-size:18.00px;color:#fff;transform:scaleX(1.385);">0.27</span><span class="t" style="left:1109.2px;top:169.5px;font-size:18.00px;color:#fff;transform:scaleX(1.385);">0.43</span><span class="t" style="left:1199.1px;top:169.5px;font-size:18.00px;color:#fff;transform:scaleX(1.385);">0.25</span><span class="t" style="left:1339.7px;top:169.5px;font-size:18.00px;color:#fff;transform:scaleX(1.385);">0.36</span><span class="t" style="left:1489.5px;top:169.5px;font-size:18.00px;color:#fff;transform:scaleX(1.385);">0.41</span><span class="t" style="left:1580.9px;top:169.5px;font-size:18.00px;color:#fff;transform:scaleX(1.385);">0.19</span><span class="t" style="left:1735.6px;top:169.5px;font-size:18.00px;color:#fff;transform:scaleX(1.385);">0.31</span><span class="t" style="left:21.5px;top:201.0px;font-size:18.00px;color:#fff;font-weight:bold;transform:scaleX(1.445);">Target Y</span><span class="t" style="left:226.2px;top:201.0px;font-size:18.00px;color:#fff;transform:scaleX(1.385);">351.48</span><span class="t" style="left:316.9px;top:201.0px;font-size:18.00px;color:#fff;transform:scaleX(1.385);">278.12</span><span class="t" style="left:412.3px;top:201.0px;font-size:18.00px;color:#fff;transform:scaleX(1.385);">224.10</span><span class="t" style="left:508.5px;top:201.0px;font-size:18.00px;color:#fff;transform:scaleX(1.385);">172.58</span><span class="t" style="left:604.3px;top:201.0px;font-size:18.00px;color:#fff;transform:scaleX(1.385);">120.18</span><span class="t" style="left:700.0px;top:201.0px;font-size:18.00px;color:#fff;transform:scaleX(1.385);">0.00</span><span class="t" style="left:776.4px;top:201.0px;font-size:18.00px;color:#fff;transform:scaleX(1.385);">35.41</span><span class="t" style="left:889.0px;top:201.0px;font-size:18.00px;color:#fff;transform:scaleX(1.385);">122.65</span><span class="t" style="left:1006.7px;top:201.0px;font-size:18.00px;color:#fff;transform:scaleX(1.385);">65.72</span><span class="t" style="left:1109.2px;top:201.0px;font-size:18.00px;color:#fff;transform:scaleX(1.385);">45.81</span><span class="t" style="left:1199.1px;top:201.0px;font-size:18.00px;color:#fff;transform:scaleX(1.385);">81.96</span><span class="t" style="left:1339.7px;top:201.0px;font-size:18.00px;color:#fff;transform:scaleX(1.385);">147.17</span><span class="t" style="left:1489.5px;top:201.0px;font-size:18.00px;color:#fff;transform:scaleX(1.385);">99.64</span><span class="t" style="left:1580.9px;top:201.0px;font-size:18.00px;color:#fff;transform:scaleX(1.385);">41.31</span><span class="t" style="left:1735.6px;top:201.0px;font-size:18.00px;color:#fff;transform:scaleX(1.385);">65.64</span><span class="t" style="left:21.5px;top:232.6px;font-size:18.00px;color:#fff;font-weight:bold;transform:scaleX(1.436);">ΔE 2000</span><span class="t" style="left:226.2px;top:232.6px;font-size:18.00px;color:#fff;transform:scaleX(1.385);">2.02</span><span class="t" style="left:316.9px;top:232.6px;font-size:18.00px;color:#fff;transform:scaleX(1.385);">2.10</span><span class="t" style="left:412.3px;top:232.6px;font-size:18.00px;color:#fff;transform:scaleX(1.385);">1.79</span><span class="t" style="left:508.5px;top:232.6px;font-size:18.00px;color:#fff;transform:scaleX(1.385);">1.63</span><span class="t" style="left:604.3px;top:232.6px;font-size:18.00px;color:#fff;transform:scaleX(1.385);">1.78</span><span class="t" style="left:700.0px;top:232.6px;font-size:18.00px;color:#fff;transform:scaleX(1.385);">1.20</span><span class="t" style="left:776.4px;top:232.6px;font-size:18.00px;color:#fff;transform:scaleX(1.385);">0.45</span><span class="t" style="left:889.0px;top:232.6px;font-size:18.00px;color:#fff;transform:scaleX(1.385);">0.66</span><span class="t" style="left:1006.7px;top:232.6px;font-size:18.00px;color:#fff;transform:scaleX(1.385);">1.25</span><span class="t" style="left:1109.2px;top:232.6px;font-size:18.00px;color:#fff;transform:scaleX(1.385);">0.64</span><span class="t" style="left:1199.1px;top:232.6px;font-size:18.00px;color:#fff;transform:scaleX(1.385);">1.24</span><span class="t" style="left:1339.7px;top:232.6px;font-size:18.00px;color:#fff;transform:scaleX(1.385);">0.21</span><span class="t" style="left:1489.5px;top:232.6px;font-size:18.00px;color:#fff;transform:scaleX(1.385);">0.32</span><span class="t" style="left:1580.9px;top:232.6px;font-size:18.00px;color:#fff;transform:scaleX(1.385);">1.32</span><span class="t" style="left:1735.6px;top:232.6px;font-size:18.00px;color:#fff;transform:scaleX(1.385);">0.36</span><span class="t" style="left:21.5px;top:264.1px;font-size:18.00px;color:#fff;font-weight:bold;transform:scaleX(1.374);">ΔE ITP</span><span class="t" style="left:226.2px;top:264.1px;font-size:18.00px;color:#fff;transform:scaleX(1.385);">1.84</span><span class="t" style="left:316.9px;top:264.1px;font-size:18.00px;color:#fff;transform:scaleX(1.385);">1.89</span><span class="t" style="left:412.3px;top:264.1px;font-size:18.00px;color:#fff;transform:scaleX(1.385);">1.70</span><span class="t" style="left:508.5px;top:264.1px;font-size:18.00px;color:#fff;transform:scaleX(1.385);">2.00</span><span class="t" style="left:604.3px;top:264.1px;font-size:18.00px;color:#fff;transform:scaleX(1.385);">2.31</span><span class="t" style="left:700.0px;top:264.1px;font-size:18.00px;color:#fff;transform:scaleX(1.385);">81.83</span><span class="t" style="left:776.4px;top:264.1px;font-size:18.00px;color:#fff;transform:scaleX(1.385);">1.54</span><span class="t" style="left:889.0px;top:264.1px;font-size:18.00px;color:#fff;transform:scaleX(1.385);">1.44</span><span class="t" style="left:1006.7px;top:264.1px;font-size:18.00px;color:#fff;transform:scaleX(1.385);">1.96</span><span class="t" style="left:1109.2px;top:264.1px;font-size:18.00px;color:#fff;transform:scaleX(1.385);">2.10</span><span class="t" style="left:1199.1px;top:264.1px;font-size:18.00px;color:#fff;transform:scaleX(1.385);">2.88</span><span class="t" style="left:1339.7px;top:264.1px;font-size:18.00px;color:#fff;transform:scaleX(1.385);">0.61</span><span class="t" style="left:1489.5px;top:264.1px;font-size:18.00px;color:#fff;transform:scaleX(1.385);">1.26</span><span class="t" style="left:1580.9px;top:264.1px;font-size:18.00px;color:#fff;transform:scaleX(1.385);">3.61</span><span class="t" style="left:1735.6px;top:264.1px;font-size:18.00px;color:#fff;transform:scaleX(1.385);">2.13</span><span class="t" style="left:233.6px;top:9.8px;font-size:18.00px;color:#fff;transform:scaleX(1.367);">White</span><span class="t" style="left:316.9px;top:9.8px;font-size:18.00px;color:#fff;transform:scaleX(1.282);">Gray 80</span><span class="t" style="left:412.3px;top:9.8px;font-size:18.00px;color:#fff;transform:scaleX(1.282);">Gray 65</span><span class="t" style="left:508.5px;top:9.8px;font-size:18.00px;color:#fff;transform:scaleX(1.282);">Gray 50</span><span class="t" style="left:604.3px;top:9.8px;font-size:18.00px;color:#fff;transform:scaleX(1.278);">Gray 35</span><span class="t" style="left:703.8px;top:9.8px;font-size:18.00px;color:#fff;transform:scaleX(1.270);">Black</span><span class="t" style="left:776.7px;top:9.8px;font-size:18.00px;color:#fff;transform:scaleX(1.275);">Dark Skin</span><span class="t" style="left:889.3px;top:9.8px;font-size:18.00px;color:#fff;transform:scaleX(1.298);">Light Skin</span><span class="t" style="left:1006.7px;top:9.8px;font-size:18.00px;color:#fff;transform:scaleX(1.250);">Blue Sky</span><span class="t" style="left:1109.6px;top:9.8px;font-size:18.00px;color:#fff;transform:scaleX(1.279);">Foliage</span><span class="t" style="left:1199.1px;top:9.8px;font-size:18.00px;color:#fff;transform:scaleX(1.324);">Blue Flower</span><span class="t" style="left:1339.7px;top:9.8px;font-size:18.00px;color:#fff;transform:scaleX(1.297);">Bluish Green</span><span class="t" style="left:1489.5px;top:9.8px;font-size:18.00px;color:#fff;transform:scaleX(1.294);">Orange</span><span class="t" style="left:1581.3px;top:9.8px;font-size:18.00px;color:#fff;transform:scaleX(1.315);">Purplish Blue</span><span class="t" style="left:1735.6px;top:9.8px;font-size:18.00px;color:#fff;transform:scaleX(1.400);">Moderate Red</span></div>
<div class="a" style="left:737.0px;top:1311.0px;width:1822.0px;height:19.5px;background:#606060;"></div>
<div class="a" style="left:738.5px;top:1312.5px;width:18.0px;height:17.0px;background:linear-gradient(#8a8a8a,#6a6a6a);border-radius:4px;"></div>
<div class="a" style="left:2535.0px;top:1312.5px;width:18.0px;height:17.0px;background:linear-gradient(#8a8a8a,#6a6a6a);border-radius:4px;"></div>
<div class="a" style="left:765.0px;top:1313.0px;width:875.0px;height:16.0px;background:#444;border-radius:8px;"></div>
<svg width="2560" height="1528" viewBox="0 0 2560 1528"><path d="M751.5 1315.5 v11.5 l-7.5 -5.75Z M2540.5 1315.5 v11.5 l7.5 -5.75Z" fill="#333"/></svg>
<div class="a" style="left:300.0px;top:1435.0px;width:1774.5px;height:74.0px;overflow:hidden;"><div class="a" style="left:-16.9px;top:0.0px;width:75.0px;height:73.5px;background:linear-gradient(#a9a9a9,#8c8c8c 45%,#5a5a5a);border-radius:7px;overflow:hidden;"><div class="a" style="left:8px;top:7.5px;width:59.5px;height:36.0px;background:#c89a86;border-radius:6px;box-shadow:inset 1px 2px 2px rgba(0,0,0,.35);"></div><span class="t" style="left:3.0px;top:54.3px;font-size:14.80px;color:#222;font-weight:bold;transform:scaleX(0.965);">Light Skin</span></div><div class="a" style="left:61.2px;top:0.0px;width:75.0px;height:73.5px;background:linear-gradient(#a9a9a9,#8c8c8c 45%,#5a5a5a);border-radius:7px;overflow:hidden;"><div class="a" style="left:8px;top:7.5px;width:59.5px;height:36.0px;background:#5e7ca4;border-radius:6px;box-shadow:inset 1px 2px 2px rgba(0,0,0,.35);"></div><span class="t" style="left:6.6px;top:54.3px;font-size:14.80px;color:#222;font-weight:bold;transform:scaleX(0.990);">Blue Sky</span></div><div class="a" style="left:139.2px;top:0.0px;width:75.0px;height:73.5px;background:linear-gradient(#a9a9a9,#8c8c8c 45%,#5a5a5a);border-radius:7px;overflow:hidden;"><div class="a" style="left:8px;top:7.5px;width:59.5px;height:36.0px;background:#596d43;border-radius:6px;box-shadow:inset 1px 2px 2px rgba(0,0,0,.35);"></div><span class="t" style="left:11.5px;top:54.3px;font-size:14.80px;color:#222;font-weight:bold;">Foliage</span></div><div class="a" style="left:217.2px;top:0.0px;width:75.0px;height:73.5px;background:linear-gradient(#a9a9a9,#8c8c8c 45%,#5a5a5a);border-radius:7px;overflow:hidden;"><div class="a" style="left:8px;top:7.5px;width:59.5px;height:18.5px;background:#8782b8;border-radius:6px;box-shadow:inset 1px 2px 2px rgba(0,0,0,.35);"></div><span class="t" style="left:12.3px;top:36.3px;font-size:14.80px;color:#222;font-weight:bold;transform:scaleX(1.040);">Blue</span><span class="t" style="left:12.3px;top:54.3px;font-size:14.80px;color:#222;font-weight:bold;transform:scaleX(1.057);">Flower</span></div><div class="a" style="left:295.2px;top:0.0px;width:75.0px;height:73.5px;background:linear-gradient(#a9a9a9,#8c8c8c 45%,#5a5a5a);border-radius:7px;overflow:hidden;"><div class="a" style="left:8px;top:7.5px;width:59.5px;height:18.5px;background:#65c1ac;border-radius:6px;box-shadow:inset 1px 2px 2px rgba(0,0,0,.35);"></div><span class="t" style="left:15.5px;top:36.3px;font-size:14.80px;color:#222;font-weight:bold;transform:scaleX(0.973);">Bluish</span><span class="t" style="left:15.5px;top:54.3px;font-size:14.80px;color:#222;font-weight:bold;transform:scaleX(1.029);">Green</span></div><div class="a" style="left:373.2px;top:0.0px;width:75.0px;height:73.5px;background:linear-gradient(#a9a9a9,#8c8c8c 45%,#5a5a5a);border-radius:7px;overflow:hidden;"><div class="a" style="left:8px;top:7.5px;width:59.5px;height:36.0px;background:#de7a2a;border-radius:6px;box-shadow:inset 1px 2px 2px rgba(0,0,0,.35);"></div><span class="t" style="left:10.9px;top:54.3px;font-size:14.80px;color:#222;font-weight:bold;transform:scaleX(1.027);">Orange</span></div><div class="a" style="left:451.2px;top:0.0px;width:75.0px;height:73.5px;background:linear-gradient(#a9a9a9,#8c8c8c 45%,#5a5a5a);border-radius:7px;overflow:hidden;"><div class="a" style="left:8px;top:7.5px;width:59.5px;height:18.5px;background:#4a5aab;border-radius:6px;box-shadow:inset 1px 2px 2px rgba(0,0,0,.35);"></div><span class="t" style="left:7.7px;top:36.3px;font-size:14.80px;color:#222;font-weight:bold;transform:scaleX(1.007);">Purplish</span><span class="t" style="left:7.7px;top:54.3px;font-size:14.80px;color:#222;font-weight:bold;transform:scaleX(1.040);">Blue</span></div><div class="a" style="left:529.3px;top:0.0px;width:75.0px;height:73.5px;background:linear-gradient(#a9a9a9,#8c8c8c 45%,#5a5a5a);border-radius:7px;overflow:hidden;"><div class="a" style="left:8px;top:7.5px;width:59.5px;height:18.5px;background:#c6545f;border-radius:6px;box-shadow:inset 1px 2px 2px rgba(0,0,0,.35);"></div><span class="t" style="left:3.3px;top:36.3px;font-size:14.80px;color:#222;font-weight:bold;transform:scaleX(1.040);">Moderate</span><span class="t" style="left:3.3px;top:54.3px;font-size:14.80px;color:#222;font-weight:bold;transform:scaleX(1.040);">Red</span></div><div class="a" style="left:607.3px;top:0.0px;width:75.0px;height:73.5px;background:linear-gradient(#a9a9a9,#8c8c8c 45%,#5a5a5a);border-radius:7px;overflow:hidden;"><div class="a" style="left:8px;top:7.5px;width:59.5px;height:36.0px;background:#5d3c6e;border-radius:6px;box-shadow:inset 1px 2px 2px rgba(0,0,0,.35);"></div><span class="t" style="left:13.6px;top:54.3px;font-size:14.80px;color:#222;font-weight:bold;transform:scaleX(1.040);">Purple</span></div><div class="a" style="left:685.3px;top:0.0px;width:75.0px;height:73.5px;background:linear-gradient(#a9a9a9,#8c8c8c 45%,#5a5a5a);border-radius:7px;overflow:hidden;"><div class="a" style="left:8px;top:7.5px;width:59.5px;height:18.5px;background:#a3c13f;border-radius:6px;box-shadow:inset 1px 2px 2px rgba(0,0,0,.35);"></div><span class="t" style="left:13.5px;top:36.3px;font-size:14.80px;color:#222;font-weight:bold;transform:scaleX(1.040);">Yellow</span><span class="t" style="left:13.5px;top:54.3px;font-size:14.80px;color:#222;font-weight:bold;transform:scaleX(1.029);">Green</span></div><div class="a" style="left:763.3px;top:0.0px;width:75.0px;height:73.5px;background:linear-gradient(#a9a9a9,#8c8c8c 45%,#5a5a5a);border-radius:7px;overflow:hidden;"><div class="a" style="left:8px;top:7.5px;width:59.5px;height:18.5px;background:#e8a12a;border-radius:6px;box-shadow:inset 1px 2px 2px rgba(0,0,0,.35);"></div><span class="t" style="left:10.9px;top:36.3px;font-size:14.80px;color:#222;font-weight:bold;transform:scaleX(1.027);">Orange</span><span class="t" style="left:10.9px;top:54.3px;font-size:14.80px;color:#222;font-weight:bold;transform:scaleX(1.040);">Yellow</span></div><div class="a" style="left:841.3px;top:0.0px;width:75.0px;height:73.5px;background:linear-gradient(#a9a9a9,#8c8c8c 45%,#5a5a5a);border-radius:7px;overflow:hidden;"><div class="a" style="left:8px;top:7.5px;width:59.5px;height:36.0px;background:#2b3a9a;border-radius:6px;box-shadow:inset 1px 2px 2px rgba(0,0,0,.35);"></div><span class="t" style="left:20.8px;top:54.3px;font-size:14.80px;color:#222;font-weight:bold;transform:scaleX(1.040);">Blue</span></div><div class="a" style="left:919.3px;top:0.0px;width:75.0px;height:73.5px;background:linear-gradient(#a9a9a9,#8c8c8c 45%,#5a5a5a);border-radius:7px;overflow:hidden;"><div class="a" style="left:8px;top:7.5px;width:59.5px;height:36.0px;background:#449a4a;border-radius:6px;box-shadow:inset 1px 2px 2px rgba(0,0,0,.35);"></div><span class="t" style="left:15.5px;top:54.3px;font-size:14.80px;color:#222;font-weight:bold;transform:scaleX(1.029);">Green</span></div><div class="a" style="left:997.3px;top:0.0px;width:75.0px;height:73.5px;background:linear-gradient(#a9a9a9,#8c8c8c 45%,#5a5a5a);border-radius:7px;overflow:hidden;"><div class="a" style="left:8px;top:7.5px;width:59.5px;height:36.0px;background:#b42c34;border-radius:6px;box-shadow:inset 1px 2px 2px rgba(0,0,0,.35);"></div><span class="t" style="left:23.0px;top:54.3px;font-size:14.80px;color:#222;font-weight:bold;transform:scaleX(1.040);">Red</span></div><div class="a" style="left:1075.4px;top:0.0px;width:75.0px;height:73.5px;background:linear-gradient(#a9a9a9,#8c8c8c 45%,#5a5a5a);border-radius:7px;overflow:hidden;"><div class="a" style="left:8px;top:7.5px;width:59.5px;height:36.0px;background:#f0cb22;border-radius:6px;box-shadow:inset 1px 2px 2px rgba(0,0,0,.35);"></div><span class="t" style="left:13.5px;top:54.3px;font-size:14.80px;color:#222;font-weight:bold;transform:scaleX(1.040);">Yellow</span></div><div class="a" style="left:1153.4px;top:0.0px;width:75.0px;height:73.5px;background:linear-gradient(#a9a9a9,#8c8c8c 45%,#5a5a5a);border-radius:7px;overflow:hidden;"><div class="a" style="left:8px;top:7.5px;width:59.5px;height:36.0px;background:#bf5796;border-radius:6px;box-shadow:inset 1px 2px 2px rgba(0,0,0,.35);"></div><span class="t" style="left:4.9px;top:54.3px;font-size:14.80px;color:#222;font-weight:bold;transform:scaleX(1.088);">Magenta</span></div><div class="a" style="left:1231.4px;top:0.0px;width:75.0px;height:73.5px;background:linear-gradient(#a9a9a9,#8c8c8c 45%,#5a5a5a);border-radius:7px;overflow:hidden;"><div class="a" style="left:8px;top:7.5px;width:59.5px;height:36.0px;background:#0087a8;border-radius:6px;box-shadow:inset 1px 2px 2px rgba(0,0,0,.35);"></div><span class="t" style="left:19.8px;top:54.3px;font-size:14.80px;color:#222;font-weight:bold;transform:scaleX(0.981);">Cyan</span></div><div class="a" style="left:1309.4px;top:0.0px;width:75.0px;height:73.5px;background:linear-gradient(#a9a9a9,#8c8c8c 45%,#5a5a5a);border-radius:7px;overflow:hidden;"><div class="a" style="left:8px;top:7.5px;width:59.5px;height:36.0px;background:#ff0000;border-radius:6px;box-shadow:inset 1px 2px 2px rgba(0,0,0,.35);"></div><span class="t" style="left:1.6px;top:54.3px;font-size:14.80px;color:#222;font-weight:bold;transform:scaleX(1.025);">100% Red</span></div><div class="a" style="left:1387.4px;top:0.0px;width:75.0px;height:73.5px;background:linear-gradient(#a9a9a9,#8c8c8c 45%,#5a5a5a);border-radius:7px;overflow:hidden;"><div class="a" style="left:8px;top:7.5px;width:59.5px;height:18.5px;background:#00ff00;border-radius:6px;box-shadow:inset 1px 2px 2px rgba(0,0,0,.35);"></div><span class="t" style="left:15.5px;top:36.3px;font-size:14.80px;color:#222;font-weight:bold;transform:scaleX(1.040);">100%</span><span class="t" style="left:15.5px;top:54.3px;font-size:14.80px;color:#222;font-weight:bold;transform:scaleX(1.029);">Green</span></div><div class="a" style="left:1465.4px;top:0.0px;width:75.0px;height:73.5px;background:linear-gradient(#a9a9a9,#8c8c8c 45%,#5a5a5a);border-radius:7px;overflow:hidden;"><div class="a" style="left:8px;top:7.5px;width:59.5px;height:18.5px;background:#0000ff;border-radius:6px;box-shadow:inset 1px 2px 2px rgba(0,0,0,.35);"></div><span class="t" style="left:17.8px;top:36.3px;font-size:14.80px;color:#222;font-weight:bold;transform:scaleX(1.040);">100%</span><span class="t" style="left:17.8px;top:54.3px;font-size:14.80px;color:#222;font-weight:bold;transform:scaleX(1.040);">Blue</span></div><div class="a" style="left:1543.4px;top:0.0px;width:75.0px;height:73.5px;background:linear-gradient(#a9a9a9,#8c8c8c 45%,#5a5a5a);border-radius:7px;overflow:hidden;"><div class="a" style="left:8px;top:7.5px;width:59.5px;height:18.5px;background:#00ffff;border-radius:6px;box-shadow:inset 1px 2px 2px rgba(0,0,0,.35);"></div><span class="t" style="left:17.8px;top:36.3px;font-size:14.80px;color:#222;font-weight:bold;transform:scaleX(1.040);">100%</span><span class="t" style="left:17.8px;top:54.3px;font-size:14.80px;color:#222;font-weight:bold;transform:scaleX(0.981);">Cyan</span></div><div class="a" style="left:1621.5px;top:0.0px;width:75.0px;height:73.5px;background:linear-gradient(#a9a9a9,#8c8c8c 45%,#5a5a5a);border-radius:7px;overflow:hidden;"><div class="a" style="left:8px;top:7.5px;width:59.5px;height:18.5px;background:#ff00ff;border-radius:6px;box-shadow:inset 1px 2px 2px rgba(0,0,0,.35);"></div><span class="t" style="left:4.9px;top:36.3px;font-size:14.80px;color:#222;font-weight:bold;transform:scaleX(1.040);">100%</span><span class="t" style="left:4.9px;top:54.3px;font-size:14.80px;color:#222;font-weight:bold;transform:scaleX(1.088);">Magenta</span></div><div class="a" style="left:1699.5px;top:0.0px;width:75.0px;height:73.5px;background:linear-gradient(#0c0c0c,#1a1a1a 40%,#4a4a4a);border-radius:7px;overflow:hidden;"><div class="a" style="left:8px;top:7.5px;width:59.5px;height:18.5px;background:#ffff00;border-radius:6px;box-shadow:inset 1px 2px 2px rgba(0,0,0,.35);"></div><span class="t" style="left:13.5px;top:36.3px;font-size:14.80px;color:#fff;font-weight:bold;transform:scaleX(1.040);">100%</span><span class="t" style="left:13.5px;top:54.3px;font-size:14.80px;color:#fff;font-weight:bold;transform:scaleX(1.040);">Yellow</span></div></div>
<div class="a" style="left:302.0px;top:1508.5px;width:1772.5px;height:19.5px;background:#606060;"></div>
<div class="a" style="left:303.5px;top:1510.0px;width:15.0px;height:17.0px;background:linear-gradient(#8a8a8a,#6a6a6a);border-radius:3px;"></div>
<div class="a" style="left:2058.0px;top:1510.0px;width:15.0px;height:17.0px;background:linear-gradient(#8a8a8a,#6a6a6a);border-radius:3px;"></div>
<div class="a" style="left:740.0px;top:1511.0px;width:1314.0px;height:16.0px;background:#484848;border-radius:8px;"></div>
<div class="a" style="left:2075.7px;top:1434.9px;width:72.0px;height:27.3px;background:linear-gradient(#9a9a9a,#7c7c7c);border-radius:7px 7px 0 0;"></div>
<div class="a" style="left:2075.7px;top:1463.8px;width:72.0px;height:62.2px;background:linear-gradient(#8a8a8a,#5c5c5c);border-radius:0 0 7px 7px;"></div>
<div class="a" style="left:2100.0px;top:1437.2px;width:24.0px;height:24.0px;border-radius:50%;background:linear-gradient(#6e6e6e,#999);"></div>
<div class="a" style="left:2088.0px;top:1471.0px;width:47.0px;height:47.0px;border:3px solid #1c1c1c;border-radius:7px;background:linear-gradient(#b4b4b4 0%,#a4a4a4 49%,#8c8c8c 51%,#808080 100%);box-shadow:0 0 2px #000;"></div>
<div class="a" style="left:2101.0px;top:1484.5px;width:21.0px;height:21.0px;background:linear-gradient(#1c1c1c 0%,#141414 49%,#000 51%,#000 100%);"></div>
<div class="a" style="left:2149.1px;top:1434.9px;width:67.9px;height:44.8px;background:linear-gradient(#a0a0a0,#707070);border-radius:7px 0 0 0;"></div>
<div class="a" style="left:2168.6px;top:1443.0px;width:30.0px;height:30.0px;border-radius:50%;background:linear-gradient(#6c6c6c,#979797);"></div>
<div class="a" style="left:2218.2px;top:1434.9px;width:66.5px;height:44.8px;background:linear-gradient(#a0a0a0,#707070);"></div>
<div class="a" style="left:2237.1px;top:1443.0px;width:30.0px;height:30.0px;border-radius:50%;background:linear-gradient(#6c6c6c,#979797);"></div>
<div class="a" style="left:2285.9px;top:1434.9px;width:66.4px;height:44.8px;background:linear-gradient(#a0a0a0,#707070);"></div>
<div class="a" style="left:2304.7px;top:1443.0px;width:30.0px;height:30.0px;border-radius:50%;background:linear-gradient(#6c6c6c,#979797);"></div>
<div class="a" style="left:2353.5px;top:1434.9px;width:65.8px;height:44.8px;background:linear-gradient(#a0a0a0,#707070);"></div>
<div class="a" style="left:2372.0px;top:1443.0px;width:30.0px;height:30.0px;border-radius:50%;background:linear-gradient(#6c6c6c,#979797);"></div>
<div class="a" style="left:2420.5px;top:1434.9px;width:66.9px;height:44.8px;background:linear-gradient(#555,#3c3c3c);"></div>
<div class="a" style="left:2439.6px;top:1443.0px;width:30.0px;height:30.0px;border-radius:50%;background:linear-gradient(#333,#4a4a4a);"></div>
<div class="a" style="left:2488.6px;top:1434.9px;width:68.7px;height:44.8px;background:linear-gradient(#a0a0a0,#707070);border-radius:0 7px 0 0;"></div>
<div class="a" style="left:2508.6px;top:1443.0px;width:30.0px;height:30.0px;border-radius:50%;background:linear-gradient(#6c6c6c,#979797);"></div>
<div class="a" style="left:2149.1px;top:1481.3px;width:203.5px;height:44.5px;background:linear-gradient(#a2a2a2,#727272);border-radius:0 0 0 7px;"></div>
<div class="a" style="left:2353.8px;top:1481.3px;width:204.7px;height:44.5px;background:linear-gradient(#a2a2a2,#727272);border-radius:0 0 7px 0;"></div>
<div class="a" style="left:2180.0px;top:1488.0px;width:30.0px;height:30.0px;border-radius:50%;background:linear-gradient(#6c6c6c,#979797);"></div>
<div class="a" style="left:2500.0px;top:1488.0px;width:30.0px;height:30.0px;border-radius:50%;background:linear-gradient(#6c6c6c,#979797);"></div>
<span class="t" style="left:2235.6px;top:1488.5px;font-size:31.50px;color:#262626;transform:scaleX(1.068);opacity:.88;text-shadow:0 0 1.5px #262626;">Back</span>
<span class="t" style="left:2396.4px;top:1488.5px;font-size:31.50px;color:#262626;transform:scaleX(1.180);opacity:.88;text-shadow:0 0 1.5px #262626;">Next</span>
<span class="t" style="left:2506.7px;top:1488.6px;font-size:30.00px;color:#2a2a2a;">»</span>
<span class="t" style="left:2188.0px;top:1488.6px;font-size:30.00px;color:#2a2a2a;">‹</span>
<svg width="2560" height="1528" viewBox="0 0 2560 1528"><path d="M315 1513 v11 l-7.5 -5.5Z M2062 1513 v11 l7.500 -5.5Z" fill="#333"/><path d="M2105.5 1451.3 h13 l-6.5 -7.5Z" fill="#333"/><rect x="2178" y="1452" width="9" height="11" fill="#222"/><path d="M2247 1450 v16 l12 -8Z" fill="#333"/><path d="M2313 1447 h-3 v14 h3 M2326 1447 h3 v14 h-3" stroke="#333" stroke-width="1.6" fill="none"/><path d="M2378 1458 c0 -8 9 -8 9 0 c0 8 9 8 9 0 c0 -8 -9 -8 -9 0 c0 8 -9 8 -9 0Z" stroke="#333" stroke-width="1.8" fill="none"/><path d="M2461 1452 a7 7 0 1 0 2 6" stroke="#1a1a1a" stroke-width="2" fill="none"/><g fill="none" stroke-linejoin="round" stroke-linecap="round"><path d="M2174 1445.500 L2227.500 1454.500 L2225 1485.500 L2184.500 1490.500Z M2184.500 1490.500 L2177 1492.500 L2208.500 1511.500 L2262.500 1493.500 L2232.500 1487.500" stroke="#fff" stroke-opacity=".55" stroke-width="6.800"/><path d="M2174 1445.500 L2227.500 1454.500 L2225 1485.500 L2184.500 1490.500Z" stroke="#8c2028" stroke-opacity=".82" stroke-width="4.200"/><path d="M2184.500 1490.500 L2177 1492.500 L2208.500 1511.500 L2262.500 1493.500 L2232.500 1487.500" stroke="#8c2028" stroke-opacity=".82" stroke-width="3.800"/></g><path d="M2189 1463.600 L2196.500 1460.300 L2207 1470.500 L2232 1443.900 L2233.700 1445.900 L2205 1483.500Z" fill="#444" fill-opacity=".9" stroke="#eee" stroke-width="1.300" stroke-opacity=".85" stroke-linejoin="round"/></svg>
<span class="t" style="left:2233.5px;top:1454.6px;font-size:33.50px;color:rgba(255,255,255,.55);font-weight:bold;transform:scaleX(1.020);-webkit-text-stroke:3.4px rgba(255,255,255,.55);text-shadow:1px 2px 3px rgba(0,0,0,.45);">NOTEBOOK</span>
<span class="t" style="left:2432.5px;top:1454.6px;font-size:33.50px;color:rgba(255,255,255,.7);transform:scaleX(0.989);-webkit-text-stroke:3px rgba(255,255,255,.7);text-shadow:1px 2px 3px rgba(0,0,0,.45);">CHECK</span>
<span class="t" style="left:2233.5px;top:1454.6px;font-size:33.50px;color:#8c1f28;font-weight:bold;transform:scaleX(1.020);opacity:.9;-webkit-text-stroke:1.3px #8c1f28;">NOTEBOOK</span>
<span class="t" style="left:2432.5px;top:1454.6px;font-size:33.50px;color:#2c2c2c;transform:scaleX(0.989);opacity:.92;-webkit-text-stroke:.7px #2c2c2c;">CHECK</span>
<div class="a" style="left:2553.0px;top:86.0px;width:7.0px;height:1442.0px;background:linear-gradient(90deg,rgba(0,0,0,0),rgba(0,0,0,.35) 55%,rgba(0,0,0,.6));"></div>
</body></html>
